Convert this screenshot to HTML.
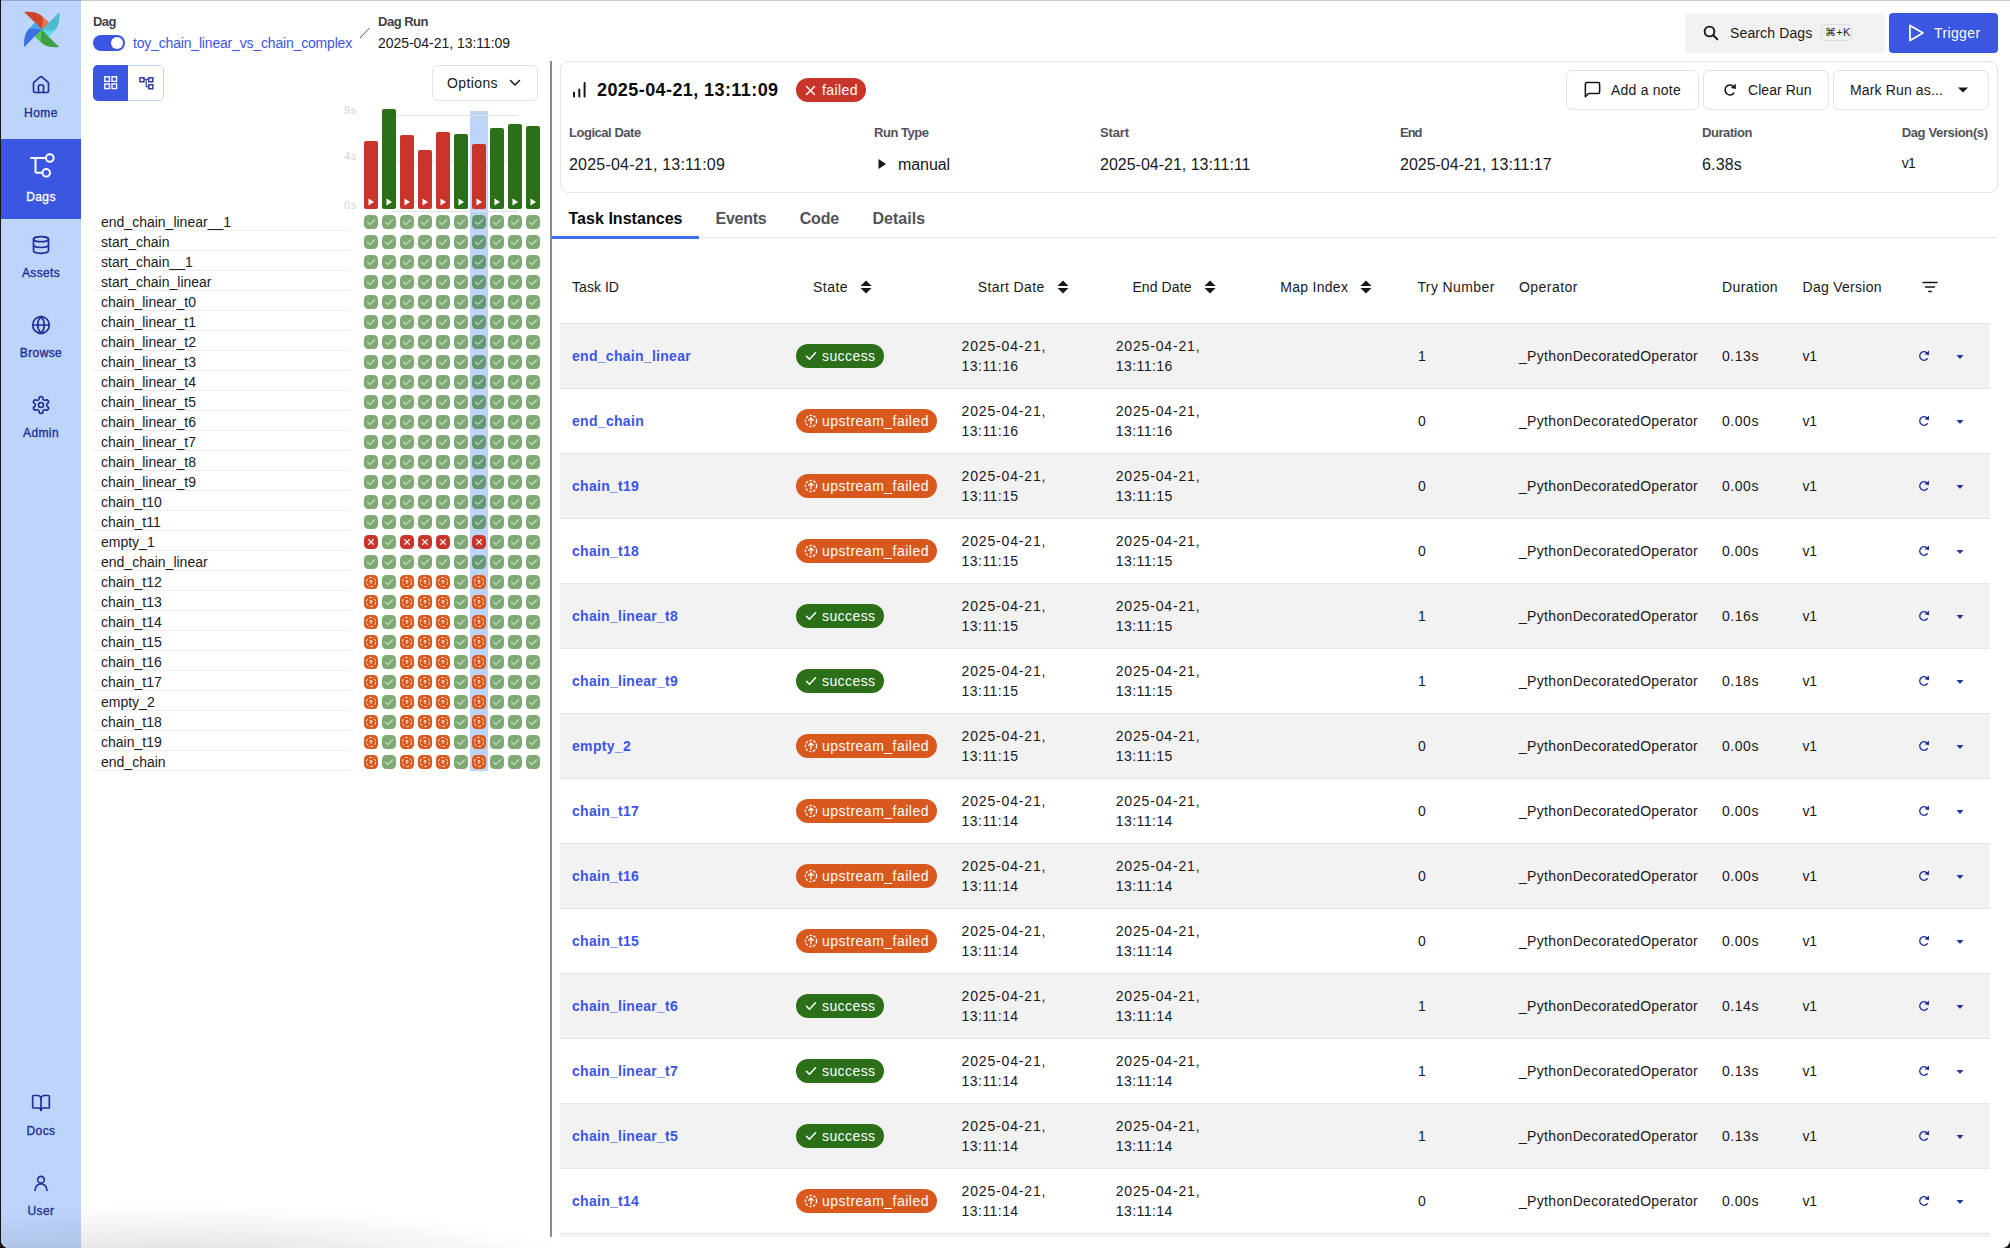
<!DOCTYPE html><html><head><meta charset="utf-8"><style>
html,body{margin:0;padding:0;}
body{width:2010px;height:1248px;overflow:hidden;background:#17130f;position:relative;font-family:"Liberation Sans",sans-serif;}
#app{position:absolute;left:1px;top:0;width:2009px;height:1248px;background:#fff;border-radius:0 0 8px 8px;overflow:hidden;}
.t{position:absolute;white-space:nowrap;font-family:"Liberation Sans",sans-serif;}
svg{display:block}
</style></head><body><div id="app">
<div style="position:absolute;left:-1px;top:0;width:2010px;height:1248px;">
<div style="position:absolute;left:1px;top:0px;width:80px;height:1248px;background:#bed5fb;"></div>
<div style="position:absolute;left:1px;top:0px;width:2009px;height:1px;background:#c9c9c9;"></div>
<div style="position:absolute;left:1px;top:0px;width:80px;height:1px;background:#8fa6cc;"></div>
<svg style="position:absolute;left:0px;top:0px;" width="81" height="60" viewBox="0 0 81 60"><g transform="translate(41.8 29.6) rotate(0)"><path d="M0 0 L-6.5 -6.8 L-17.7 -17.7 C-10 -18 -3 -17 1 -12.5 C4 -9.5 6 -8 7.2 -6.7 Z" fill="#d0442a"/><path d="M0 0 L1 -12.5 C4 -9.5 6 -8 7.2 -6.7 Z" fill="#ee714f"/></g><g transform="translate(41.8 29.6) rotate(90)"><path d="M0 0 L-6.5 -6.8 L-17.7 -17.7 C-10 -18 -3 -17 1 -12.5 C4 -9.5 6 -8 7.2 -6.7 Z" fill="#4bbccc"/><path d="M0 0 L1 -12.5 C4 -9.5 6 -8 7.2 -6.7 Z" fill="#5bd8ea"/></g><g transform="translate(41.8 29.6) rotate(180)"><path d="M0 0 L-6.5 -6.8 L-17.7 -17.7 C-10 -18 -3 -17 1 -12.5 C4 -9.5 6 -8 7.2 -6.7 Z" fill="#3d9f46"/><path d="M0 0 L1 -12.5 C4 -9.5 6 -8 7.2 -6.7 Z" fill="#50c95a"/></g><g transform="translate(41.8 29.6) rotate(270)"><path d="M0 0 L-6.5 -6.8 L-17.7 -17.7 C-10 -18 -3 -17 1 -12.5 C4 -9.5 6 -8 7.2 -6.7 Z" fill="#3a6fe0"/><path d="M0 0 L1 -12.5 C4 -9.5 6 -8 7.2 -6.7 Z" fill="#48a9f2"/></g></svg>
<svg style="position:absolute;left:31px;top:75px;" width="20" height="20" viewBox="0 0 24 24"><g fill="none" stroke="#1f2f96" stroke-width="2" stroke-linecap="round" stroke-linejoin="round"><path d="M15 21v-8a1 1 0 0 0-1-1h-4a1 1 0 0 0-1 1v8"/><path d="M3 10a2 2 0 0 1 .709-1.528l7-5.999a2 2 0 0 1 2.582 0l7 5.999A2 2 0 0 1 21 10v9a2 2 0 0 1-2 2H5a2 2 0 0 1-2-2z"/></g></svg>
<div class="t" style="left:24.034203125px;top:107px;font-size:12px;line-height:12px;color:#1f2f96;letter-spacing:0.480px;-webkit-text-stroke:0.35px #1f2f96;">Home</div>
<div style="position:absolute;left:1px;top:139px;width:80px;height:80px;background:#3b56e0;"></div>
<svg style="position:absolute;left:30px;top:153px;" width="25" height="25" viewBox="0 0 25 25"><g fill="none" stroke="#ffffff" stroke-width="2" stroke-linecap="round" stroke-linejoin="round"><path d="M1 5h14.8"/><circle cx="19.8" cy="5" r="3.8"/><path d="M5.5 5v13.3a1.5 1.5 0 0 0 1.5 1.5h5.5"/><circle cx="16.2" cy="19.8" r="3.8"/></g></svg>
<div class="t" style="left:26.1521328125px;top:191px;font-size:12px;line-height:12px;color:#ffffff;letter-spacing:0.420px;-webkit-text-stroke:0.35px #ffffff;">Dags</div>
<svg style="position:absolute;left:31px;top:235px;" width="20" height="20" viewBox="0 0 24 24"><g fill="none" stroke="#1f2f96" stroke-width="2" stroke-linecap="round" stroke-linejoin="round"><ellipse cx="12" cy="5" rx="9" ry="3"/><path d="M3 5V19A9 3 0 0 0 21 19V5"/><path d="M3 12A9 3 0 0 0 21 12"/></g></svg>
<div class="t" style="left:21.913375px;top:267px;font-size:12px;line-height:12px;color:#1f2f96;letter-spacing:0.360px;-webkit-text-stroke:0.35px #1f2f96;">Assets</div>
<svg style="position:absolute;left:31px;top:315px;" width="20" height="20" viewBox="0 0 24 24"><g fill="none" stroke="#1f2f96" stroke-width="2" stroke-linecap="round" stroke-linejoin="round"><circle cx="12" cy="12" r="10"/><path d="M12 2a14.5 14.5 0 0 0 0 20 14.5 14.5 0 0 0 0-20"/><path d="M2 12h20"/></g></svg>
<div class="t" style="left:19.7921328125px;top:347px;font-size:12px;line-height:12px;color:#1f2f96;letter-spacing:0.400px;-webkit-text-stroke:0.35px #1f2f96;">Browse</div>
<svg style="position:absolute;left:31px;top:395px;" width="20" height="20" viewBox="0 0 24 24"><g fill="none" stroke="#1f2f96" stroke-width="2" stroke-linecap="round" stroke-linejoin="round"><path d="M12.22 2h-.44a2 2 0 0 0-2 2v.18a2 2 0 0 1-1 1.73l-.43.25a2 2 0 0 1-2 0l-.15-.08a2 2 0 0 0-2.73.73l-.22.38a2 2 0 0 0 .73 2.73l.15.1a2 2 0 0 1 1 1.72v.51a2 2 0 0 1-1 1.74l-.15.09a2 2 0 0 0-.73 2.73l.22.38a2 2 0 0 0 2.73.73l.15-.08a2 2 0 0 1 2 0l.43.25a2 2 0 0 1 1 1.73V20a2 2 0 0 0 2 2h.44a2 2 0 0 0 2-2v-.18a2 2 0 0 1 1-1.73l.43-.25a2 2 0 0 1 2 0l.15.08a2 2 0 0 0 2.73-.73l.22-.39a2 2 0 0 0-.73-2.73l-.15-.08a2 2 0 0 1-1-1.74v-.5a2 2 0 0 1 1-1.74l.15-.09a2 2 0 0 0 .73-2.73l-.22-.38a2 2 0 0 0-2.73-.73l-.15.08a2 2 0 0 1-2 0l-.43-.25a2 2 0 0 1-1-1.73V4a2 2 0 0 0-2-2z"/><circle cx="12" cy="12" r="3"/></g></svg>
<div class="t" style="left:22.9721328125px;top:427px;font-size:12px;line-height:12px;color:#1f2f96;letter-spacing:0.408px;-webkit-text-stroke:0.35px #1f2f96;">Admin</div>
<svg style="position:absolute;left:31px;top:1093px;" width="20" height="20" viewBox="0 0 24 24"><g fill="none" stroke="#1f2f96" stroke-width="2" stroke-linecap="round" stroke-linejoin="round"><path d="M12 7v14"/><path d="M3 18a1 1 0 0 1-1-1V4a1 1 0 0 1 1-1h5a4 4 0 0 1 4 4 4 4 0 0 1 4-4h5a1 1 0 0 1 1 1v13a1 1 0 0 1-1 1h-6a3 3 0 0 0-3 3 3 3 0 0 0-3-3z"/></g></svg>
<div class="t" style="left:26.50946875px;top:1125px;font-size:12px;line-height:12px;color:#1f2f96;letter-spacing:0.410px;-webkit-text-stroke:0.35px #1f2f96;">Docs</div>
<svg style="position:absolute;left:31px;top:1173px;" width="20" height="20" viewBox="0 0 24 24"><g fill="none" stroke="#1f2f96" stroke-width="2" stroke-linecap="round" stroke-linejoin="round"><circle cx="12" cy="8" r="4"/><path d="M5 21v-1a7 7 0 0 1 14 0v1"/></g></svg>
<div class="t" style="left:27.5715390625px;top:1205px;font-size:12px;line-height:12px;color:#1f2f96;letter-spacing:0.380px;-webkit-text-stroke:0.35px #1f2f96;">User</div>
<div class="t" style="left:93px;top:15px;font-size:13px;line-height:13px;color:#3f3f46;font-weight:700;letter-spacing:-0.520px;">Dag</div>
<div style="position:absolute;left:93px;top:35px;width:32px;height:16px;background:#3b56e0;border-radius:8px;"></div>
<div style="position:absolute;left:111px;top:37px;width:12px;height:12px;background:#fff;border-radius:6px;"></div>
<div class="t" style="left:133px;top:36px;font-size:14px;line-height:14px;color:#3b55e6;letter-spacing:-0.179px;">toy_chain_linear_vs_chain_complex</div>
<svg style="position:absolute;left:358px;top:26px;" width="14" height="14" viewBox="0 0 14 14"><line x1="2" y1="12" x2="11.5" y2="2" stroke="#52525b" stroke-width="1"/></svg>
<div class="t" style="left:378px;top:15px;font-size:13px;line-height:13px;color:#3f3f46;font-weight:700;letter-spacing:-0.491px;">Dag Run</div>
<div class="t" style="left:378px;top:36px;font-size:14px;line-height:14px;color:#18181b;letter-spacing:-0.042px;">2025-04-21, 13:11:09</div>
<div style="position:absolute;left:1685px;top:13px;width:200px;height:40px;background:#f2f2f2;border-radius:4px;"></div>
<svg style="position:absolute;left:1702px;top:24px;" width="18" height="18" viewBox="0 0 24 24"><g fill="none" stroke="#18181b" stroke-width="2.6" stroke-linecap="round"><circle cx="10" cy="10" r="6.5"/><path d="M15 15l5.5 5.5"/></g></svg>
<div class="t" style="left:1730px;top:26px;font-size:14px;line-height:14px;color:#18181b;letter-spacing:0.134px;">Search Dags</div>
<div style="position:absolute;left:1821px;top:24px;width:31px;height:17px;background:#f1f1f2;border:1px solid #dedee2;border-radius:4px;box-sizing:border-box;"></div>
<div class="t" style="left:1825px;top:27px;font-size:11px;line-height:11px;color:#27272a;letter-spacing:0.330px;">⌘+K</div>
<div style="position:absolute;left:1889px;top:13px;width:109px;height:40px;background:#3b56e0;border-radius:4px;"></div>
<svg style="position:absolute;left:1906px;top:24px;" width="20" height="18" viewBox="0 0 20 18"><path d="M4 1.5L17 9 4 16.5z" fill="none" stroke="#fff" stroke-width="1.8" stroke-linejoin="round"/></svg>
<div class="t" style="left:1934px;top:26px;font-size:14px;line-height:14px;color:#fff;letter-spacing:0.382px;">Trigger</div>
<div style="position:absolute;left:93px;top:65px;width:71px;height:36px;border:1px solid #bcd3fb;border-radius:5px;box-sizing:border-box;background:#fff;"></div>
<div style="position:absolute;left:93px;top:65px;width:35px;height:36px;background:#3b56e0;border-radius:5px 0 0 5px;"></div>
<svg style="position:absolute;left:103px;top:75px;" width="16" height="16" viewBox="0 0 16 16"><g fill="none" stroke="#fff" stroke-width="1.4"><rect x="1.8" y="1.8" width="4.6" height="4.6"/><rect x="9" y="1.8" width="4.6" height="4.6"/><rect x="1.8" y="9" width="4.6" height="4.6"/><rect x="9" y="9" width="4.6" height="4.6"/></g></svg>
<svg style="position:absolute;left:138px;top:75px;" width="16" height="16" viewBox="0 0 16 16"><g fill="none" stroke="#1f2f96" stroke-width="1.4"><rect x="2" y="2.8" width="4" height="4"/><rect x="10.8" y="2.8" width="4" height="4"/><rect x="10.8" y="9.8" width="4" height="4"/><path d="M6 4.3h4.8M8.2 4.3v7.5h2.6" stroke-width="1.1"/></g></svg>
<div style="position:absolute;left:432px;top:65px;width:106px;height:36px;border:1px solid #e4e4e7;border-radius:6px;box-sizing:border-box;background:#fff;"></div>
<div class="t" style="left:447px;top:76px;font-size:14px;line-height:14px;color:#18181b;letter-spacing:0.393px;">Options</div>
<svg style="position:absolute;left:509px;top:78px;" width="12" height="10" viewBox="0 0 12 10"><path d="M1.5 2.5l4.5 4.5 4.5-4.5" fill="none" stroke="#18181b" stroke-width="1.5" stroke-linecap="round" stroke-linejoin="round"/></svg>
<div style="position:absolute;left:470px;top:111px;width:18px;height:660px;background:#bed5fb;"></div>
<div style="position:absolute;left:392px;top:115px;width:125px;height:1px;background:#e4e4e7;"></div>
<div style="position:absolute;left:392px;top:161px;width:125px;height:1px;background:#e4e4e7;"></div>
<div style="position:absolute;left:392px;top:211px;width:125px;height:1px;background:#e4e4e7;"></div>
<div class="t" style="left:344px;top:105px;font-size:11px;line-height:11px;color:#d4d4d8;letter-spacing:0.691px;">9s</div>
<div class="t" style="left:344px;top:151px;font-size:11px;line-height:11px;color:#d4d4d8;letter-spacing:0.691px;">4s</div>
<div class="t" style="left:344px;top:200px;font-size:11px;line-height:11px;color:#d4d4d8;letter-spacing:0.691px;">0s</div>
<div style="position:absolute;left:364px;top:141px;width:14px;height:68px;background:#c9352a;border-radius:2px;"></div>
<svg style="position:absolute;left:368px;top:198px;" width="7" height="8" viewBox="0 0 7 8"><path d="M0.5 0.5L6 4 0.5 7.5z" fill="#fff"/></svg>
<div style="position:absolute;left:382px;top:109px;width:14px;height:100px;background:#2b7019;border-radius:2px;"></div>
<svg style="position:absolute;left:386px;top:198px;" width="7" height="8" viewBox="0 0 7 8"><path d="M0.5 0.5L6 4 0.5 7.5z" fill="#fff"/></svg>
<div style="position:absolute;left:400px;top:135px;width:14px;height:74px;background:#c9352a;border-radius:2px;"></div>
<svg style="position:absolute;left:404px;top:198px;" width="7" height="8" viewBox="0 0 7 8"><path d="M0.5 0.5L6 4 0.5 7.5z" fill="#fff"/></svg>
<div style="position:absolute;left:418px;top:150px;width:14px;height:59px;background:#c9352a;border-radius:2px;"></div>
<svg style="position:absolute;left:422px;top:198px;" width="7" height="8" viewBox="0 0 7 8"><path d="M0.5 0.5L6 4 0.5 7.5z" fill="#fff"/></svg>
<div style="position:absolute;left:436px;top:132px;width:14px;height:77px;background:#c9352a;border-radius:2px;"></div>
<svg style="position:absolute;left:440px;top:198px;" width="7" height="8" viewBox="0 0 7 8"><path d="M0.5 0.5L6 4 0.5 7.5z" fill="#fff"/></svg>
<div style="position:absolute;left:454px;top:134px;width:14px;height:75px;background:#2b7019;border-radius:2px;"></div>
<svg style="position:absolute;left:458px;top:198px;" width="7" height="8" viewBox="0 0 7 8"><path d="M0.5 0.5L6 4 0.5 7.5z" fill="#fff"/></svg>
<div style="position:absolute;left:472px;top:144px;width:14px;height:65px;background:#c9352a;border-radius:2px;"></div>
<svg style="position:absolute;left:476px;top:198px;" width="7" height="8" viewBox="0 0 7 8"><path d="M0.5 0.5L6 4 0.5 7.5z" fill="#fff"/></svg>
<div style="position:absolute;left:490px;top:128px;width:14px;height:81px;background:#2b7019;border-radius:2px;"></div>
<svg style="position:absolute;left:494px;top:198px;" width="7" height="8" viewBox="0 0 7 8"><path d="M0.5 0.5L6 4 0.5 7.5z" fill="#fff"/></svg>
<div style="position:absolute;left:508px;top:124px;width:14px;height:85px;background:#2b7019;border-radius:2px;"></div>
<svg style="position:absolute;left:512px;top:198px;" width="7" height="8" viewBox="0 0 7 8"><path d="M0.5 0.5L6 4 0.5 7.5z" fill="#fff"/></svg>
<div style="position:absolute;left:526px;top:126px;width:14px;height:83px;background:#2b7019;border-radius:2px;"></div>
<svg style="position:absolute;left:530px;top:198px;" width="7" height="8" viewBox="0 0 7 8"><path d="M0.5 0.5L6 4 0.5 7.5z" fill="#fff"/></svg>
<div class="t" style="left:101px;top:215px;font-size:14px;line-height:14px;color:#202024;">end_chain_linear__1</div>
<div style="position:absolute;left:93px;top:230px;width:257px;height:1px;background:#ededf0;"></div>
<svg style="position:absolute;left:364px;top:215px" width="14" height="14" viewBox="0 0 14 14"><rect width="14" height="14" rx="4.5" fill="#2b7019" fill-opacity="0.6"/><path d="M3.5 7.1l2.5 2.5 4.6-4.8" fill="none" stroke="#fff" stroke-width="0.95" stroke-linecap="round" stroke-linejoin="round"/></svg>
<svg style="position:absolute;left:382px;top:215px" width="14" height="14" viewBox="0 0 14 14"><rect width="14" height="14" rx="4.5" fill="#2b7019" fill-opacity="0.6"/><path d="M3.5 7.1l2.5 2.5 4.6-4.8" fill="none" stroke="#fff" stroke-width="0.95" stroke-linecap="round" stroke-linejoin="round"/></svg>
<svg style="position:absolute;left:400px;top:215px" width="14" height="14" viewBox="0 0 14 14"><rect width="14" height="14" rx="4.5" fill="#2b7019" fill-opacity="0.6"/><path d="M3.5 7.1l2.5 2.5 4.6-4.8" fill="none" stroke="#fff" stroke-width="0.95" stroke-linecap="round" stroke-linejoin="round"/></svg>
<svg style="position:absolute;left:418px;top:215px" width="14" height="14" viewBox="0 0 14 14"><rect width="14" height="14" rx="4.5" fill="#2b7019" fill-opacity="0.6"/><path d="M3.5 7.1l2.5 2.5 4.6-4.8" fill="none" stroke="#fff" stroke-width="0.95" stroke-linecap="round" stroke-linejoin="round"/></svg>
<svg style="position:absolute;left:436px;top:215px" width="14" height="14" viewBox="0 0 14 14"><rect width="14" height="14" rx="4.5" fill="#2b7019" fill-opacity="0.6"/><path d="M3.5 7.1l2.5 2.5 4.6-4.8" fill="none" stroke="#fff" stroke-width="0.95" stroke-linecap="round" stroke-linejoin="round"/></svg>
<svg style="position:absolute;left:454px;top:215px" width="14" height="14" viewBox="0 0 14 14"><rect width="14" height="14" rx="4.5" fill="#2b7019" fill-opacity="0.6"/><path d="M3.5 7.1l2.5 2.5 4.6-4.8" fill="none" stroke="#fff" stroke-width="0.95" stroke-linecap="round" stroke-linejoin="round"/></svg>
<svg style="position:absolute;left:472px;top:215px" width="14" height="14" viewBox="0 0 14 14"><rect width="14" height="14" rx="4.5" fill="#2b7019" fill-opacity="0.6"/><path d="M3.5 7.1l2.5 2.5 4.6-4.8" fill="none" stroke="#fff" stroke-width="0.95" stroke-linecap="round" stroke-linejoin="round"/></svg>
<svg style="position:absolute;left:490px;top:215px" width="14" height="14" viewBox="0 0 14 14"><rect width="14" height="14" rx="4.5" fill="#2b7019" fill-opacity="0.6"/><path d="M3.5 7.1l2.5 2.5 4.6-4.8" fill="none" stroke="#fff" stroke-width="0.95" stroke-linecap="round" stroke-linejoin="round"/></svg>
<svg style="position:absolute;left:508px;top:215px" width="14" height="14" viewBox="0 0 14 14"><rect width="14" height="14" rx="4.5" fill="#2b7019" fill-opacity="0.6"/><path d="M3.5 7.1l2.5 2.5 4.6-4.8" fill="none" stroke="#fff" stroke-width="0.95" stroke-linecap="round" stroke-linejoin="round"/></svg>
<svg style="position:absolute;left:526px;top:215px" width="14" height="14" viewBox="0 0 14 14"><rect width="14" height="14" rx="4.5" fill="#2b7019" fill-opacity="0.6"/><path d="M3.5 7.1l2.5 2.5 4.6-4.8" fill="none" stroke="#fff" stroke-width="0.95" stroke-linecap="round" stroke-linejoin="round"/></svg>
<div class="t" style="left:101px;top:235px;font-size:14px;line-height:14px;color:#202024;">start_chain</div>
<div style="position:absolute;left:93px;top:250px;width:257px;height:1px;background:#ededf0;"></div>
<svg style="position:absolute;left:364px;top:235px" width="14" height="14" viewBox="0 0 14 14"><rect width="14" height="14" rx="4.5" fill="#2b7019" fill-opacity="0.6"/><path d="M3.5 7.1l2.5 2.5 4.6-4.8" fill="none" stroke="#fff" stroke-width="0.95" stroke-linecap="round" stroke-linejoin="round"/></svg>
<svg style="position:absolute;left:382px;top:235px" width="14" height="14" viewBox="0 0 14 14"><rect width="14" height="14" rx="4.5" fill="#2b7019" fill-opacity="0.6"/><path d="M3.5 7.1l2.5 2.5 4.6-4.8" fill="none" stroke="#fff" stroke-width="0.95" stroke-linecap="round" stroke-linejoin="round"/></svg>
<svg style="position:absolute;left:400px;top:235px" width="14" height="14" viewBox="0 0 14 14"><rect width="14" height="14" rx="4.5" fill="#2b7019" fill-opacity="0.6"/><path d="M3.5 7.1l2.5 2.5 4.6-4.8" fill="none" stroke="#fff" stroke-width="0.95" stroke-linecap="round" stroke-linejoin="round"/></svg>
<svg style="position:absolute;left:418px;top:235px" width="14" height="14" viewBox="0 0 14 14"><rect width="14" height="14" rx="4.5" fill="#2b7019" fill-opacity="0.6"/><path d="M3.5 7.1l2.5 2.5 4.6-4.8" fill="none" stroke="#fff" stroke-width="0.95" stroke-linecap="round" stroke-linejoin="round"/></svg>
<svg style="position:absolute;left:436px;top:235px" width="14" height="14" viewBox="0 0 14 14"><rect width="14" height="14" rx="4.5" fill="#2b7019" fill-opacity="0.6"/><path d="M3.5 7.1l2.5 2.5 4.6-4.8" fill="none" stroke="#fff" stroke-width="0.95" stroke-linecap="round" stroke-linejoin="round"/></svg>
<svg style="position:absolute;left:454px;top:235px" width="14" height="14" viewBox="0 0 14 14"><rect width="14" height="14" rx="4.5" fill="#2b7019" fill-opacity="0.6"/><path d="M3.5 7.1l2.5 2.5 4.6-4.8" fill="none" stroke="#fff" stroke-width="0.95" stroke-linecap="round" stroke-linejoin="round"/></svg>
<svg style="position:absolute;left:472px;top:235px" width="14" height="14" viewBox="0 0 14 14"><rect width="14" height="14" rx="4.5" fill="#2b7019" fill-opacity="0.6"/><path d="M3.5 7.1l2.5 2.5 4.6-4.8" fill="none" stroke="#fff" stroke-width="0.95" stroke-linecap="round" stroke-linejoin="round"/></svg>
<svg style="position:absolute;left:490px;top:235px" width="14" height="14" viewBox="0 0 14 14"><rect width="14" height="14" rx="4.5" fill="#2b7019" fill-opacity="0.6"/><path d="M3.5 7.1l2.5 2.5 4.6-4.8" fill="none" stroke="#fff" stroke-width="0.95" stroke-linecap="round" stroke-linejoin="round"/></svg>
<svg style="position:absolute;left:508px;top:235px" width="14" height="14" viewBox="0 0 14 14"><rect width="14" height="14" rx="4.5" fill="#2b7019" fill-opacity="0.6"/><path d="M3.5 7.1l2.5 2.5 4.6-4.8" fill="none" stroke="#fff" stroke-width="0.95" stroke-linecap="round" stroke-linejoin="round"/></svg>
<svg style="position:absolute;left:526px;top:235px" width="14" height="14" viewBox="0 0 14 14"><rect width="14" height="14" rx="4.5" fill="#2b7019" fill-opacity="0.6"/><path d="M3.5 7.1l2.5 2.5 4.6-4.8" fill="none" stroke="#fff" stroke-width="0.95" stroke-linecap="round" stroke-linejoin="round"/></svg>
<div class="t" style="left:101px;top:255px;font-size:14px;line-height:14px;color:#202024;">start_chain__1</div>
<div style="position:absolute;left:93px;top:270px;width:257px;height:1px;background:#ededf0;"></div>
<svg style="position:absolute;left:364px;top:255px" width="14" height="14" viewBox="0 0 14 14"><rect width="14" height="14" rx="4.5" fill="#2b7019" fill-opacity="0.6"/><path d="M3.5 7.1l2.5 2.5 4.6-4.8" fill="none" stroke="#fff" stroke-width="0.95" stroke-linecap="round" stroke-linejoin="round"/></svg>
<svg style="position:absolute;left:382px;top:255px" width="14" height="14" viewBox="0 0 14 14"><rect width="14" height="14" rx="4.5" fill="#2b7019" fill-opacity="0.6"/><path d="M3.5 7.1l2.5 2.5 4.6-4.8" fill="none" stroke="#fff" stroke-width="0.95" stroke-linecap="round" stroke-linejoin="round"/></svg>
<svg style="position:absolute;left:400px;top:255px" width="14" height="14" viewBox="0 0 14 14"><rect width="14" height="14" rx="4.5" fill="#2b7019" fill-opacity="0.6"/><path d="M3.5 7.1l2.5 2.5 4.6-4.8" fill="none" stroke="#fff" stroke-width="0.95" stroke-linecap="round" stroke-linejoin="round"/></svg>
<svg style="position:absolute;left:418px;top:255px" width="14" height="14" viewBox="0 0 14 14"><rect width="14" height="14" rx="4.5" fill="#2b7019" fill-opacity="0.6"/><path d="M3.5 7.1l2.5 2.5 4.6-4.8" fill="none" stroke="#fff" stroke-width="0.95" stroke-linecap="round" stroke-linejoin="round"/></svg>
<svg style="position:absolute;left:436px;top:255px" width="14" height="14" viewBox="0 0 14 14"><rect width="14" height="14" rx="4.5" fill="#2b7019" fill-opacity="0.6"/><path d="M3.5 7.1l2.5 2.5 4.6-4.8" fill="none" stroke="#fff" stroke-width="0.95" stroke-linecap="round" stroke-linejoin="round"/></svg>
<svg style="position:absolute;left:454px;top:255px" width="14" height="14" viewBox="0 0 14 14"><rect width="14" height="14" rx="4.5" fill="#2b7019" fill-opacity="0.6"/><path d="M3.5 7.1l2.5 2.5 4.6-4.8" fill="none" stroke="#fff" stroke-width="0.95" stroke-linecap="round" stroke-linejoin="round"/></svg>
<svg style="position:absolute;left:472px;top:255px" width="14" height="14" viewBox="0 0 14 14"><rect width="14" height="14" rx="4.5" fill="#2b7019" fill-opacity="0.6"/><path d="M3.5 7.1l2.5 2.5 4.6-4.8" fill="none" stroke="#fff" stroke-width="0.95" stroke-linecap="round" stroke-linejoin="round"/></svg>
<svg style="position:absolute;left:490px;top:255px" width="14" height="14" viewBox="0 0 14 14"><rect width="14" height="14" rx="4.5" fill="#2b7019" fill-opacity="0.6"/><path d="M3.5 7.1l2.5 2.5 4.6-4.8" fill="none" stroke="#fff" stroke-width="0.95" stroke-linecap="round" stroke-linejoin="round"/></svg>
<svg style="position:absolute;left:508px;top:255px" width="14" height="14" viewBox="0 0 14 14"><rect width="14" height="14" rx="4.5" fill="#2b7019" fill-opacity="0.6"/><path d="M3.5 7.1l2.5 2.5 4.6-4.8" fill="none" stroke="#fff" stroke-width="0.95" stroke-linecap="round" stroke-linejoin="round"/></svg>
<svg style="position:absolute;left:526px;top:255px" width="14" height="14" viewBox="0 0 14 14"><rect width="14" height="14" rx="4.5" fill="#2b7019" fill-opacity="0.6"/><path d="M3.5 7.1l2.5 2.5 4.6-4.8" fill="none" stroke="#fff" stroke-width="0.95" stroke-linecap="round" stroke-linejoin="round"/></svg>
<div class="t" style="left:101px;top:275px;font-size:14px;line-height:14px;color:#202024;">start_chain_linear</div>
<div style="position:absolute;left:93px;top:290px;width:257px;height:1px;background:#ededf0;"></div>
<svg style="position:absolute;left:364px;top:275px" width="14" height="14" viewBox="0 0 14 14"><rect width="14" height="14" rx="4.5" fill="#2b7019" fill-opacity="0.6"/><path d="M3.5 7.1l2.5 2.5 4.6-4.8" fill="none" stroke="#fff" stroke-width="0.95" stroke-linecap="round" stroke-linejoin="round"/></svg>
<svg style="position:absolute;left:382px;top:275px" width="14" height="14" viewBox="0 0 14 14"><rect width="14" height="14" rx="4.5" fill="#2b7019" fill-opacity="0.6"/><path d="M3.5 7.1l2.5 2.5 4.6-4.8" fill="none" stroke="#fff" stroke-width="0.95" stroke-linecap="round" stroke-linejoin="round"/></svg>
<svg style="position:absolute;left:400px;top:275px" width="14" height="14" viewBox="0 0 14 14"><rect width="14" height="14" rx="4.5" fill="#2b7019" fill-opacity="0.6"/><path d="M3.5 7.1l2.5 2.5 4.6-4.8" fill="none" stroke="#fff" stroke-width="0.95" stroke-linecap="round" stroke-linejoin="round"/></svg>
<svg style="position:absolute;left:418px;top:275px" width="14" height="14" viewBox="0 0 14 14"><rect width="14" height="14" rx="4.5" fill="#2b7019" fill-opacity="0.6"/><path d="M3.5 7.1l2.5 2.5 4.6-4.8" fill="none" stroke="#fff" stroke-width="0.95" stroke-linecap="round" stroke-linejoin="round"/></svg>
<svg style="position:absolute;left:436px;top:275px" width="14" height="14" viewBox="0 0 14 14"><rect width="14" height="14" rx="4.5" fill="#2b7019" fill-opacity="0.6"/><path d="M3.5 7.1l2.5 2.5 4.6-4.8" fill="none" stroke="#fff" stroke-width="0.95" stroke-linecap="round" stroke-linejoin="round"/></svg>
<svg style="position:absolute;left:454px;top:275px" width="14" height="14" viewBox="0 0 14 14"><rect width="14" height="14" rx="4.5" fill="#2b7019" fill-opacity="0.6"/><path d="M3.5 7.1l2.5 2.5 4.6-4.8" fill="none" stroke="#fff" stroke-width="0.95" stroke-linecap="round" stroke-linejoin="round"/></svg>
<svg style="position:absolute;left:472px;top:275px" width="14" height="14" viewBox="0 0 14 14"><rect width="14" height="14" rx="4.5" fill="#2b7019" fill-opacity="0.6"/><path d="M3.5 7.1l2.5 2.5 4.6-4.8" fill="none" stroke="#fff" stroke-width="0.95" stroke-linecap="round" stroke-linejoin="round"/></svg>
<svg style="position:absolute;left:490px;top:275px" width="14" height="14" viewBox="0 0 14 14"><rect width="14" height="14" rx="4.5" fill="#2b7019" fill-opacity="0.6"/><path d="M3.5 7.1l2.5 2.5 4.6-4.8" fill="none" stroke="#fff" stroke-width="0.95" stroke-linecap="round" stroke-linejoin="round"/></svg>
<svg style="position:absolute;left:508px;top:275px" width="14" height="14" viewBox="0 0 14 14"><rect width="14" height="14" rx="4.5" fill="#2b7019" fill-opacity="0.6"/><path d="M3.5 7.1l2.5 2.5 4.6-4.8" fill="none" stroke="#fff" stroke-width="0.95" stroke-linecap="round" stroke-linejoin="round"/></svg>
<svg style="position:absolute;left:526px;top:275px" width="14" height="14" viewBox="0 0 14 14"><rect width="14" height="14" rx="4.5" fill="#2b7019" fill-opacity="0.6"/><path d="M3.5 7.1l2.5 2.5 4.6-4.8" fill="none" stroke="#fff" stroke-width="0.95" stroke-linecap="round" stroke-linejoin="round"/></svg>
<div class="t" style="left:101px;top:295px;font-size:14px;line-height:14px;color:#202024;">chain_linear_t0</div>
<div style="position:absolute;left:93px;top:310px;width:257px;height:1px;background:#ededf0;"></div>
<svg style="position:absolute;left:364px;top:295px" width="14" height="14" viewBox="0 0 14 14"><rect width="14" height="14" rx="4.5" fill="#2b7019" fill-opacity="0.6"/><path d="M3.5 7.1l2.5 2.5 4.6-4.8" fill="none" stroke="#fff" stroke-width="0.95" stroke-linecap="round" stroke-linejoin="round"/></svg>
<svg style="position:absolute;left:382px;top:295px" width="14" height="14" viewBox="0 0 14 14"><rect width="14" height="14" rx="4.5" fill="#2b7019" fill-opacity="0.6"/><path d="M3.5 7.1l2.5 2.5 4.6-4.8" fill="none" stroke="#fff" stroke-width="0.95" stroke-linecap="round" stroke-linejoin="round"/></svg>
<svg style="position:absolute;left:400px;top:295px" width="14" height="14" viewBox="0 0 14 14"><rect width="14" height="14" rx="4.5" fill="#2b7019" fill-opacity="0.6"/><path d="M3.5 7.1l2.5 2.5 4.6-4.8" fill="none" stroke="#fff" stroke-width="0.95" stroke-linecap="round" stroke-linejoin="round"/></svg>
<svg style="position:absolute;left:418px;top:295px" width="14" height="14" viewBox="0 0 14 14"><rect width="14" height="14" rx="4.5" fill="#2b7019" fill-opacity="0.6"/><path d="M3.5 7.1l2.5 2.5 4.6-4.8" fill="none" stroke="#fff" stroke-width="0.95" stroke-linecap="round" stroke-linejoin="round"/></svg>
<svg style="position:absolute;left:436px;top:295px" width="14" height="14" viewBox="0 0 14 14"><rect width="14" height="14" rx="4.5" fill="#2b7019" fill-opacity="0.6"/><path d="M3.5 7.1l2.5 2.5 4.6-4.8" fill="none" stroke="#fff" stroke-width="0.95" stroke-linecap="round" stroke-linejoin="round"/></svg>
<svg style="position:absolute;left:454px;top:295px" width="14" height="14" viewBox="0 0 14 14"><rect width="14" height="14" rx="4.5" fill="#2b7019" fill-opacity="0.6"/><path d="M3.5 7.1l2.5 2.5 4.6-4.8" fill="none" stroke="#fff" stroke-width="0.95" stroke-linecap="round" stroke-linejoin="round"/></svg>
<svg style="position:absolute;left:472px;top:295px" width="14" height="14" viewBox="0 0 14 14"><rect width="14" height="14" rx="4.5" fill="#2b7019" fill-opacity="0.6"/><path d="M3.5 7.1l2.5 2.5 4.6-4.8" fill="none" stroke="#fff" stroke-width="0.95" stroke-linecap="round" stroke-linejoin="round"/></svg>
<svg style="position:absolute;left:490px;top:295px" width="14" height="14" viewBox="0 0 14 14"><rect width="14" height="14" rx="4.5" fill="#2b7019" fill-opacity="0.6"/><path d="M3.5 7.1l2.5 2.5 4.6-4.8" fill="none" stroke="#fff" stroke-width="0.95" stroke-linecap="round" stroke-linejoin="round"/></svg>
<svg style="position:absolute;left:508px;top:295px" width="14" height="14" viewBox="0 0 14 14"><rect width="14" height="14" rx="4.5" fill="#2b7019" fill-opacity="0.6"/><path d="M3.5 7.1l2.5 2.5 4.6-4.8" fill="none" stroke="#fff" stroke-width="0.95" stroke-linecap="round" stroke-linejoin="round"/></svg>
<svg style="position:absolute;left:526px;top:295px" width="14" height="14" viewBox="0 0 14 14"><rect width="14" height="14" rx="4.5" fill="#2b7019" fill-opacity="0.6"/><path d="M3.5 7.1l2.5 2.5 4.6-4.8" fill="none" stroke="#fff" stroke-width="0.95" stroke-linecap="round" stroke-linejoin="round"/></svg>
<div class="t" style="left:101px;top:315px;font-size:14px;line-height:14px;color:#202024;">chain_linear_t1</div>
<div style="position:absolute;left:93px;top:330px;width:257px;height:1px;background:#ededf0;"></div>
<svg style="position:absolute;left:364px;top:315px" width="14" height="14" viewBox="0 0 14 14"><rect width="14" height="14" rx="4.5" fill="#2b7019" fill-opacity="0.6"/><path d="M3.5 7.1l2.5 2.5 4.6-4.8" fill="none" stroke="#fff" stroke-width="0.95" stroke-linecap="round" stroke-linejoin="round"/></svg>
<svg style="position:absolute;left:382px;top:315px" width="14" height="14" viewBox="0 0 14 14"><rect width="14" height="14" rx="4.5" fill="#2b7019" fill-opacity="0.6"/><path d="M3.5 7.1l2.5 2.5 4.6-4.8" fill="none" stroke="#fff" stroke-width="0.95" stroke-linecap="round" stroke-linejoin="round"/></svg>
<svg style="position:absolute;left:400px;top:315px" width="14" height="14" viewBox="0 0 14 14"><rect width="14" height="14" rx="4.5" fill="#2b7019" fill-opacity="0.6"/><path d="M3.5 7.1l2.5 2.5 4.6-4.8" fill="none" stroke="#fff" stroke-width="0.95" stroke-linecap="round" stroke-linejoin="round"/></svg>
<svg style="position:absolute;left:418px;top:315px" width="14" height="14" viewBox="0 0 14 14"><rect width="14" height="14" rx="4.5" fill="#2b7019" fill-opacity="0.6"/><path d="M3.5 7.1l2.5 2.5 4.6-4.8" fill="none" stroke="#fff" stroke-width="0.95" stroke-linecap="round" stroke-linejoin="round"/></svg>
<svg style="position:absolute;left:436px;top:315px" width="14" height="14" viewBox="0 0 14 14"><rect width="14" height="14" rx="4.5" fill="#2b7019" fill-opacity="0.6"/><path d="M3.5 7.1l2.5 2.5 4.6-4.8" fill="none" stroke="#fff" stroke-width="0.95" stroke-linecap="round" stroke-linejoin="round"/></svg>
<svg style="position:absolute;left:454px;top:315px" width="14" height="14" viewBox="0 0 14 14"><rect width="14" height="14" rx="4.5" fill="#2b7019" fill-opacity="0.6"/><path d="M3.5 7.1l2.5 2.5 4.6-4.8" fill="none" stroke="#fff" stroke-width="0.95" stroke-linecap="round" stroke-linejoin="round"/></svg>
<svg style="position:absolute;left:472px;top:315px" width="14" height="14" viewBox="0 0 14 14"><rect width="14" height="14" rx="4.5" fill="#2b7019" fill-opacity="0.6"/><path d="M3.5 7.1l2.5 2.5 4.6-4.8" fill="none" stroke="#fff" stroke-width="0.95" stroke-linecap="round" stroke-linejoin="round"/></svg>
<svg style="position:absolute;left:490px;top:315px" width="14" height="14" viewBox="0 0 14 14"><rect width="14" height="14" rx="4.5" fill="#2b7019" fill-opacity="0.6"/><path d="M3.5 7.1l2.5 2.5 4.6-4.8" fill="none" stroke="#fff" stroke-width="0.95" stroke-linecap="round" stroke-linejoin="round"/></svg>
<svg style="position:absolute;left:508px;top:315px" width="14" height="14" viewBox="0 0 14 14"><rect width="14" height="14" rx="4.5" fill="#2b7019" fill-opacity="0.6"/><path d="M3.5 7.1l2.5 2.5 4.6-4.8" fill="none" stroke="#fff" stroke-width="0.95" stroke-linecap="round" stroke-linejoin="round"/></svg>
<svg style="position:absolute;left:526px;top:315px" width="14" height="14" viewBox="0 0 14 14"><rect width="14" height="14" rx="4.5" fill="#2b7019" fill-opacity="0.6"/><path d="M3.5 7.1l2.5 2.5 4.6-4.8" fill="none" stroke="#fff" stroke-width="0.95" stroke-linecap="round" stroke-linejoin="round"/></svg>
<div class="t" style="left:101px;top:335px;font-size:14px;line-height:14px;color:#202024;">chain_linear_t2</div>
<div style="position:absolute;left:93px;top:350px;width:257px;height:1px;background:#ededf0;"></div>
<svg style="position:absolute;left:364px;top:335px" width="14" height="14" viewBox="0 0 14 14"><rect width="14" height="14" rx="4.5" fill="#2b7019" fill-opacity="0.6"/><path d="M3.5 7.1l2.5 2.5 4.6-4.8" fill="none" stroke="#fff" stroke-width="0.95" stroke-linecap="round" stroke-linejoin="round"/></svg>
<svg style="position:absolute;left:382px;top:335px" width="14" height="14" viewBox="0 0 14 14"><rect width="14" height="14" rx="4.5" fill="#2b7019" fill-opacity="0.6"/><path d="M3.5 7.1l2.5 2.5 4.6-4.8" fill="none" stroke="#fff" stroke-width="0.95" stroke-linecap="round" stroke-linejoin="round"/></svg>
<svg style="position:absolute;left:400px;top:335px" width="14" height="14" viewBox="0 0 14 14"><rect width="14" height="14" rx="4.5" fill="#2b7019" fill-opacity="0.6"/><path d="M3.5 7.1l2.5 2.5 4.6-4.8" fill="none" stroke="#fff" stroke-width="0.95" stroke-linecap="round" stroke-linejoin="round"/></svg>
<svg style="position:absolute;left:418px;top:335px" width="14" height="14" viewBox="0 0 14 14"><rect width="14" height="14" rx="4.5" fill="#2b7019" fill-opacity="0.6"/><path d="M3.5 7.1l2.5 2.5 4.6-4.8" fill="none" stroke="#fff" stroke-width="0.95" stroke-linecap="round" stroke-linejoin="round"/></svg>
<svg style="position:absolute;left:436px;top:335px" width="14" height="14" viewBox="0 0 14 14"><rect width="14" height="14" rx="4.5" fill="#2b7019" fill-opacity="0.6"/><path d="M3.5 7.1l2.5 2.5 4.6-4.8" fill="none" stroke="#fff" stroke-width="0.95" stroke-linecap="round" stroke-linejoin="round"/></svg>
<svg style="position:absolute;left:454px;top:335px" width="14" height="14" viewBox="0 0 14 14"><rect width="14" height="14" rx="4.5" fill="#2b7019" fill-opacity="0.6"/><path d="M3.5 7.1l2.5 2.5 4.6-4.8" fill="none" stroke="#fff" stroke-width="0.95" stroke-linecap="round" stroke-linejoin="round"/></svg>
<svg style="position:absolute;left:472px;top:335px" width="14" height="14" viewBox="0 0 14 14"><rect width="14" height="14" rx="4.5" fill="#2b7019" fill-opacity="0.6"/><path d="M3.5 7.1l2.5 2.5 4.6-4.8" fill="none" stroke="#fff" stroke-width="0.95" stroke-linecap="round" stroke-linejoin="round"/></svg>
<svg style="position:absolute;left:490px;top:335px" width="14" height="14" viewBox="0 0 14 14"><rect width="14" height="14" rx="4.5" fill="#2b7019" fill-opacity="0.6"/><path d="M3.5 7.1l2.5 2.5 4.6-4.8" fill="none" stroke="#fff" stroke-width="0.95" stroke-linecap="round" stroke-linejoin="round"/></svg>
<svg style="position:absolute;left:508px;top:335px" width="14" height="14" viewBox="0 0 14 14"><rect width="14" height="14" rx="4.5" fill="#2b7019" fill-opacity="0.6"/><path d="M3.5 7.1l2.5 2.5 4.6-4.8" fill="none" stroke="#fff" stroke-width="0.95" stroke-linecap="round" stroke-linejoin="round"/></svg>
<svg style="position:absolute;left:526px;top:335px" width="14" height="14" viewBox="0 0 14 14"><rect width="14" height="14" rx="4.5" fill="#2b7019" fill-opacity="0.6"/><path d="M3.5 7.1l2.5 2.5 4.6-4.8" fill="none" stroke="#fff" stroke-width="0.95" stroke-linecap="round" stroke-linejoin="round"/></svg>
<div class="t" style="left:101px;top:355px;font-size:14px;line-height:14px;color:#202024;">chain_linear_t3</div>
<div style="position:absolute;left:93px;top:370px;width:257px;height:1px;background:#ededf0;"></div>
<svg style="position:absolute;left:364px;top:355px" width="14" height="14" viewBox="0 0 14 14"><rect width="14" height="14" rx="4.5" fill="#2b7019" fill-opacity="0.6"/><path d="M3.5 7.1l2.5 2.5 4.6-4.8" fill="none" stroke="#fff" stroke-width="0.95" stroke-linecap="round" stroke-linejoin="round"/></svg>
<svg style="position:absolute;left:382px;top:355px" width="14" height="14" viewBox="0 0 14 14"><rect width="14" height="14" rx="4.5" fill="#2b7019" fill-opacity="0.6"/><path d="M3.5 7.1l2.5 2.5 4.6-4.8" fill="none" stroke="#fff" stroke-width="0.95" stroke-linecap="round" stroke-linejoin="round"/></svg>
<svg style="position:absolute;left:400px;top:355px" width="14" height="14" viewBox="0 0 14 14"><rect width="14" height="14" rx="4.5" fill="#2b7019" fill-opacity="0.6"/><path d="M3.5 7.1l2.5 2.5 4.6-4.8" fill="none" stroke="#fff" stroke-width="0.95" stroke-linecap="round" stroke-linejoin="round"/></svg>
<svg style="position:absolute;left:418px;top:355px" width="14" height="14" viewBox="0 0 14 14"><rect width="14" height="14" rx="4.5" fill="#2b7019" fill-opacity="0.6"/><path d="M3.5 7.1l2.5 2.5 4.6-4.8" fill="none" stroke="#fff" stroke-width="0.95" stroke-linecap="round" stroke-linejoin="round"/></svg>
<svg style="position:absolute;left:436px;top:355px" width="14" height="14" viewBox="0 0 14 14"><rect width="14" height="14" rx="4.5" fill="#2b7019" fill-opacity="0.6"/><path d="M3.5 7.1l2.5 2.5 4.6-4.8" fill="none" stroke="#fff" stroke-width="0.95" stroke-linecap="round" stroke-linejoin="round"/></svg>
<svg style="position:absolute;left:454px;top:355px" width="14" height="14" viewBox="0 0 14 14"><rect width="14" height="14" rx="4.5" fill="#2b7019" fill-opacity="0.6"/><path d="M3.5 7.1l2.5 2.5 4.6-4.8" fill="none" stroke="#fff" stroke-width="0.95" stroke-linecap="round" stroke-linejoin="round"/></svg>
<svg style="position:absolute;left:472px;top:355px" width="14" height="14" viewBox="0 0 14 14"><rect width="14" height="14" rx="4.5" fill="#2b7019" fill-opacity="0.6"/><path d="M3.5 7.1l2.5 2.5 4.6-4.8" fill="none" stroke="#fff" stroke-width="0.95" stroke-linecap="round" stroke-linejoin="round"/></svg>
<svg style="position:absolute;left:490px;top:355px" width="14" height="14" viewBox="0 0 14 14"><rect width="14" height="14" rx="4.5" fill="#2b7019" fill-opacity="0.6"/><path d="M3.5 7.1l2.5 2.5 4.6-4.8" fill="none" stroke="#fff" stroke-width="0.95" stroke-linecap="round" stroke-linejoin="round"/></svg>
<svg style="position:absolute;left:508px;top:355px" width="14" height="14" viewBox="0 0 14 14"><rect width="14" height="14" rx="4.5" fill="#2b7019" fill-opacity="0.6"/><path d="M3.5 7.1l2.5 2.5 4.6-4.8" fill="none" stroke="#fff" stroke-width="0.95" stroke-linecap="round" stroke-linejoin="round"/></svg>
<svg style="position:absolute;left:526px;top:355px" width="14" height="14" viewBox="0 0 14 14"><rect width="14" height="14" rx="4.5" fill="#2b7019" fill-opacity="0.6"/><path d="M3.5 7.1l2.5 2.5 4.6-4.8" fill="none" stroke="#fff" stroke-width="0.95" stroke-linecap="round" stroke-linejoin="round"/></svg>
<div class="t" style="left:101px;top:375px;font-size:14px;line-height:14px;color:#202024;">chain_linear_t4</div>
<div style="position:absolute;left:93px;top:390px;width:257px;height:1px;background:#ededf0;"></div>
<svg style="position:absolute;left:364px;top:375px" width="14" height="14" viewBox="0 0 14 14"><rect width="14" height="14" rx="4.5" fill="#2b7019" fill-opacity="0.6"/><path d="M3.5 7.1l2.5 2.5 4.6-4.8" fill="none" stroke="#fff" stroke-width="0.95" stroke-linecap="round" stroke-linejoin="round"/></svg>
<svg style="position:absolute;left:382px;top:375px" width="14" height="14" viewBox="0 0 14 14"><rect width="14" height="14" rx="4.5" fill="#2b7019" fill-opacity="0.6"/><path d="M3.5 7.1l2.5 2.5 4.6-4.8" fill="none" stroke="#fff" stroke-width="0.95" stroke-linecap="round" stroke-linejoin="round"/></svg>
<svg style="position:absolute;left:400px;top:375px" width="14" height="14" viewBox="0 0 14 14"><rect width="14" height="14" rx="4.5" fill="#2b7019" fill-opacity="0.6"/><path d="M3.5 7.1l2.5 2.5 4.6-4.8" fill="none" stroke="#fff" stroke-width="0.95" stroke-linecap="round" stroke-linejoin="round"/></svg>
<svg style="position:absolute;left:418px;top:375px" width="14" height="14" viewBox="0 0 14 14"><rect width="14" height="14" rx="4.5" fill="#2b7019" fill-opacity="0.6"/><path d="M3.5 7.1l2.5 2.5 4.6-4.8" fill="none" stroke="#fff" stroke-width="0.95" stroke-linecap="round" stroke-linejoin="round"/></svg>
<svg style="position:absolute;left:436px;top:375px" width="14" height="14" viewBox="0 0 14 14"><rect width="14" height="14" rx="4.5" fill="#2b7019" fill-opacity="0.6"/><path d="M3.5 7.1l2.5 2.5 4.6-4.8" fill="none" stroke="#fff" stroke-width="0.95" stroke-linecap="round" stroke-linejoin="round"/></svg>
<svg style="position:absolute;left:454px;top:375px" width="14" height="14" viewBox="0 0 14 14"><rect width="14" height="14" rx="4.5" fill="#2b7019" fill-opacity="0.6"/><path d="M3.5 7.1l2.5 2.5 4.6-4.8" fill="none" stroke="#fff" stroke-width="0.95" stroke-linecap="round" stroke-linejoin="round"/></svg>
<svg style="position:absolute;left:472px;top:375px" width="14" height="14" viewBox="0 0 14 14"><rect width="14" height="14" rx="4.5" fill="#2b7019" fill-opacity="0.6"/><path d="M3.5 7.1l2.5 2.5 4.6-4.8" fill="none" stroke="#fff" stroke-width="0.95" stroke-linecap="round" stroke-linejoin="round"/></svg>
<svg style="position:absolute;left:490px;top:375px" width="14" height="14" viewBox="0 0 14 14"><rect width="14" height="14" rx="4.5" fill="#2b7019" fill-opacity="0.6"/><path d="M3.5 7.1l2.5 2.5 4.6-4.8" fill="none" stroke="#fff" stroke-width="0.95" stroke-linecap="round" stroke-linejoin="round"/></svg>
<svg style="position:absolute;left:508px;top:375px" width="14" height="14" viewBox="0 0 14 14"><rect width="14" height="14" rx="4.5" fill="#2b7019" fill-opacity="0.6"/><path d="M3.5 7.1l2.5 2.5 4.6-4.8" fill="none" stroke="#fff" stroke-width="0.95" stroke-linecap="round" stroke-linejoin="round"/></svg>
<svg style="position:absolute;left:526px;top:375px" width="14" height="14" viewBox="0 0 14 14"><rect width="14" height="14" rx="4.5" fill="#2b7019" fill-opacity="0.6"/><path d="M3.5 7.1l2.5 2.5 4.6-4.8" fill="none" stroke="#fff" stroke-width="0.95" stroke-linecap="round" stroke-linejoin="round"/></svg>
<div class="t" style="left:101px;top:395px;font-size:14px;line-height:14px;color:#202024;">chain_linear_t5</div>
<div style="position:absolute;left:93px;top:410px;width:257px;height:1px;background:#ededf0;"></div>
<svg style="position:absolute;left:364px;top:395px" width="14" height="14" viewBox="0 0 14 14"><rect width="14" height="14" rx="4.5" fill="#2b7019" fill-opacity="0.6"/><path d="M3.5 7.1l2.5 2.5 4.6-4.8" fill="none" stroke="#fff" stroke-width="0.95" stroke-linecap="round" stroke-linejoin="round"/></svg>
<svg style="position:absolute;left:382px;top:395px" width="14" height="14" viewBox="0 0 14 14"><rect width="14" height="14" rx="4.5" fill="#2b7019" fill-opacity="0.6"/><path d="M3.5 7.1l2.5 2.5 4.6-4.8" fill="none" stroke="#fff" stroke-width="0.95" stroke-linecap="round" stroke-linejoin="round"/></svg>
<svg style="position:absolute;left:400px;top:395px" width="14" height="14" viewBox="0 0 14 14"><rect width="14" height="14" rx="4.5" fill="#2b7019" fill-opacity="0.6"/><path d="M3.5 7.1l2.5 2.5 4.6-4.8" fill="none" stroke="#fff" stroke-width="0.95" stroke-linecap="round" stroke-linejoin="round"/></svg>
<svg style="position:absolute;left:418px;top:395px" width="14" height="14" viewBox="0 0 14 14"><rect width="14" height="14" rx="4.5" fill="#2b7019" fill-opacity="0.6"/><path d="M3.5 7.1l2.5 2.5 4.6-4.8" fill="none" stroke="#fff" stroke-width="0.95" stroke-linecap="round" stroke-linejoin="round"/></svg>
<svg style="position:absolute;left:436px;top:395px" width="14" height="14" viewBox="0 0 14 14"><rect width="14" height="14" rx="4.5" fill="#2b7019" fill-opacity="0.6"/><path d="M3.5 7.1l2.5 2.5 4.6-4.8" fill="none" stroke="#fff" stroke-width="0.95" stroke-linecap="round" stroke-linejoin="round"/></svg>
<svg style="position:absolute;left:454px;top:395px" width="14" height="14" viewBox="0 0 14 14"><rect width="14" height="14" rx="4.5" fill="#2b7019" fill-opacity="0.6"/><path d="M3.5 7.1l2.5 2.5 4.6-4.8" fill="none" stroke="#fff" stroke-width="0.95" stroke-linecap="round" stroke-linejoin="round"/></svg>
<svg style="position:absolute;left:472px;top:395px" width="14" height="14" viewBox="0 0 14 14"><rect width="14" height="14" rx="4.5" fill="#2b7019" fill-opacity="0.6"/><path d="M3.5 7.1l2.5 2.5 4.6-4.8" fill="none" stroke="#fff" stroke-width="0.95" stroke-linecap="round" stroke-linejoin="round"/></svg>
<svg style="position:absolute;left:490px;top:395px" width="14" height="14" viewBox="0 0 14 14"><rect width="14" height="14" rx="4.5" fill="#2b7019" fill-opacity="0.6"/><path d="M3.5 7.1l2.5 2.5 4.6-4.8" fill="none" stroke="#fff" stroke-width="0.95" stroke-linecap="round" stroke-linejoin="round"/></svg>
<svg style="position:absolute;left:508px;top:395px" width="14" height="14" viewBox="0 0 14 14"><rect width="14" height="14" rx="4.5" fill="#2b7019" fill-opacity="0.6"/><path d="M3.5 7.1l2.5 2.5 4.6-4.8" fill="none" stroke="#fff" stroke-width="0.95" stroke-linecap="round" stroke-linejoin="round"/></svg>
<svg style="position:absolute;left:526px;top:395px" width="14" height="14" viewBox="0 0 14 14"><rect width="14" height="14" rx="4.5" fill="#2b7019" fill-opacity="0.6"/><path d="M3.5 7.1l2.5 2.5 4.6-4.8" fill="none" stroke="#fff" stroke-width="0.95" stroke-linecap="round" stroke-linejoin="round"/></svg>
<div class="t" style="left:101px;top:415px;font-size:14px;line-height:14px;color:#202024;">chain_linear_t6</div>
<div style="position:absolute;left:93px;top:430px;width:257px;height:1px;background:#ededf0;"></div>
<svg style="position:absolute;left:364px;top:415px" width="14" height="14" viewBox="0 0 14 14"><rect width="14" height="14" rx="4.5" fill="#2b7019" fill-opacity="0.6"/><path d="M3.5 7.1l2.5 2.5 4.6-4.8" fill="none" stroke="#fff" stroke-width="0.95" stroke-linecap="round" stroke-linejoin="round"/></svg>
<svg style="position:absolute;left:382px;top:415px" width="14" height="14" viewBox="0 0 14 14"><rect width="14" height="14" rx="4.5" fill="#2b7019" fill-opacity="0.6"/><path d="M3.5 7.1l2.5 2.5 4.6-4.8" fill="none" stroke="#fff" stroke-width="0.95" stroke-linecap="round" stroke-linejoin="round"/></svg>
<svg style="position:absolute;left:400px;top:415px" width="14" height="14" viewBox="0 0 14 14"><rect width="14" height="14" rx="4.5" fill="#2b7019" fill-opacity="0.6"/><path d="M3.5 7.1l2.5 2.5 4.6-4.8" fill="none" stroke="#fff" stroke-width="0.95" stroke-linecap="round" stroke-linejoin="round"/></svg>
<svg style="position:absolute;left:418px;top:415px" width="14" height="14" viewBox="0 0 14 14"><rect width="14" height="14" rx="4.5" fill="#2b7019" fill-opacity="0.6"/><path d="M3.5 7.1l2.5 2.5 4.6-4.8" fill="none" stroke="#fff" stroke-width="0.95" stroke-linecap="round" stroke-linejoin="round"/></svg>
<svg style="position:absolute;left:436px;top:415px" width="14" height="14" viewBox="0 0 14 14"><rect width="14" height="14" rx="4.5" fill="#2b7019" fill-opacity="0.6"/><path d="M3.5 7.1l2.5 2.5 4.6-4.8" fill="none" stroke="#fff" stroke-width="0.95" stroke-linecap="round" stroke-linejoin="round"/></svg>
<svg style="position:absolute;left:454px;top:415px" width="14" height="14" viewBox="0 0 14 14"><rect width="14" height="14" rx="4.5" fill="#2b7019" fill-opacity="0.6"/><path d="M3.5 7.1l2.5 2.5 4.6-4.8" fill="none" stroke="#fff" stroke-width="0.95" stroke-linecap="round" stroke-linejoin="round"/></svg>
<svg style="position:absolute;left:472px;top:415px" width="14" height="14" viewBox="0 0 14 14"><rect width="14" height="14" rx="4.5" fill="#2b7019" fill-opacity="0.6"/><path d="M3.5 7.1l2.5 2.5 4.6-4.8" fill="none" stroke="#fff" stroke-width="0.95" stroke-linecap="round" stroke-linejoin="round"/></svg>
<svg style="position:absolute;left:490px;top:415px" width="14" height="14" viewBox="0 0 14 14"><rect width="14" height="14" rx="4.5" fill="#2b7019" fill-opacity="0.6"/><path d="M3.5 7.1l2.5 2.5 4.6-4.8" fill="none" stroke="#fff" stroke-width="0.95" stroke-linecap="round" stroke-linejoin="round"/></svg>
<svg style="position:absolute;left:508px;top:415px" width="14" height="14" viewBox="0 0 14 14"><rect width="14" height="14" rx="4.5" fill="#2b7019" fill-opacity="0.6"/><path d="M3.5 7.1l2.5 2.5 4.6-4.8" fill="none" stroke="#fff" stroke-width="0.95" stroke-linecap="round" stroke-linejoin="round"/></svg>
<svg style="position:absolute;left:526px;top:415px" width="14" height="14" viewBox="0 0 14 14"><rect width="14" height="14" rx="4.5" fill="#2b7019" fill-opacity="0.6"/><path d="M3.5 7.1l2.5 2.5 4.6-4.8" fill="none" stroke="#fff" stroke-width="0.95" stroke-linecap="round" stroke-linejoin="round"/></svg>
<div class="t" style="left:101px;top:435px;font-size:14px;line-height:14px;color:#202024;">chain_linear_t7</div>
<div style="position:absolute;left:93px;top:450px;width:257px;height:1px;background:#ededf0;"></div>
<svg style="position:absolute;left:364px;top:435px" width="14" height="14" viewBox="0 0 14 14"><rect width="14" height="14" rx="4.5" fill="#2b7019" fill-opacity="0.6"/><path d="M3.5 7.1l2.5 2.5 4.6-4.8" fill="none" stroke="#fff" stroke-width="0.95" stroke-linecap="round" stroke-linejoin="round"/></svg>
<svg style="position:absolute;left:382px;top:435px" width="14" height="14" viewBox="0 0 14 14"><rect width="14" height="14" rx="4.5" fill="#2b7019" fill-opacity="0.6"/><path d="M3.5 7.1l2.5 2.5 4.6-4.8" fill="none" stroke="#fff" stroke-width="0.95" stroke-linecap="round" stroke-linejoin="round"/></svg>
<svg style="position:absolute;left:400px;top:435px" width="14" height="14" viewBox="0 0 14 14"><rect width="14" height="14" rx="4.5" fill="#2b7019" fill-opacity="0.6"/><path d="M3.5 7.1l2.5 2.5 4.6-4.8" fill="none" stroke="#fff" stroke-width="0.95" stroke-linecap="round" stroke-linejoin="round"/></svg>
<svg style="position:absolute;left:418px;top:435px" width="14" height="14" viewBox="0 0 14 14"><rect width="14" height="14" rx="4.5" fill="#2b7019" fill-opacity="0.6"/><path d="M3.5 7.1l2.5 2.5 4.6-4.8" fill="none" stroke="#fff" stroke-width="0.95" stroke-linecap="round" stroke-linejoin="round"/></svg>
<svg style="position:absolute;left:436px;top:435px" width="14" height="14" viewBox="0 0 14 14"><rect width="14" height="14" rx="4.5" fill="#2b7019" fill-opacity="0.6"/><path d="M3.5 7.1l2.5 2.5 4.6-4.8" fill="none" stroke="#fff" stroke-width="0.95" stroke-linecap="round" stroke-linejoin="round"/></svg>
<svg style="position:absolute;left:454px;top:435px" width="14" height="14" viewBox="0 0 14 14"><rect width="14" height="14" rx="4.5" fill="#2b7019" fill-opacity="0.6"/><path d="M3.5 7.1l2.5 2.5 4.6-4.8" fill="none" stroke="#fff" stroke-width="0.95" stroke-linecap="round" stroke-linejoin="round"/></svg>
<svg style="position:absolute;left:472px;top:435px" width="14" height="14" viewBox="0 0 14 14"><rect width="14" height="14" rx="4.5" fill="#2b7019" fill-opacity="0.6"/><path d="M3.5 7.1l2.5 2.5 4.6-4.8" fill="none" stroke="#fff" stroke-width="0.95" stroke-linecap="round" stroke-linejoin="round"/></svg>
<svg style="position:absolute;left:490px;top:435px" width="14" height="14" viewBox="0 0 14 14"><rect width="14" height="14" rx="4.5" fill="#2b7019" fill-opacity="0.6"/><path d="M3.5 7.1l2.5 2.5 4.6-4.8" fill="none" stroke="#fff" stroke-width="0.95" stroke-linecap="round" stroke-linejoin="round"/></svg>
<svg style="position:absolute;left:508px;top:435px" width="14" height="14" viewBox="0 0 14 14"><rect width="14" height="14" rx="4.5" fill="#2b7019" fill-opacity="0.6"/><path d="M3.5 7.1l2.5 2.5 4.6-4.8" fill="none" stroke="#fff" stroke-width="0.95" stroke-linecap="round" stroke-linejoin="round"/></svg>
<svg style="position:absolute;left:526px;top:435px" width="14" height="14" viewBox="0 0 14 14"><rect width="14" height="14" rx="4.5" fill="#2b7019" fill-opacity="0.6"/><path d="M3.5 7.1l2.5 2.5 4.6-4.8" fill="none" stroke="#fff" stroke-width="0.95" stroke-linecap="round" stroke-linejoin="round"/></svg>
<div class="t" style="left:101px;top:455px;font-size:14px;line-height:14px;color:#202024;">chain_linear_t8</div>
<div style="position:absolute;left:93px;top:470px;width:257px;height:1px;background:#ededf0;"></div>
<svg style="position:absolute;left:364px;top:455px" width="14" height="14" viewBox="0 0 14 14"><rect width="14" height="14" rx="4.5" fill="#2b7019" fill-opacity="0.6"/><path d="M3.5 7.1l2.5 2.5 4.6-4.8" fill="none" stroke="#fff" stroke-width="0.95" stroke-linecap="round" stroke-linejoin="round"/></svg>
<svg style="position:absolute;left:382px;top:455px" width="14" height="14" viewBox="0 0 14 14"><rect width="14" height="14" rx="4.5" fill="#2b7019" fill-opacity="0.6"/><path d="M3.5 7.1l2.5 2.5 4.6-4.8" fill="none" stroke="#fff" stroke-width="0.95" stroke-linecap="round" stroke-linejoin="round"/></svg>
<svg style="position:absolute;left:400px;top:455px" width="14" height="14" viewBox="0 0 14 14"><rect width="14" height="14" rx="4.5" fill="#2b7019" fill-opacity="0.6"/><path d="M3.5 7.1l2.5 2.5 4.6-4.8" fill="none" stroke="#fff" stroke-width="0.95" stroke-linecap="round" stroke-linejoin="round"/></svg>
<svg style="position:absolute;left:418px;top:455px" width="14" height="14" viewBox="0 0 14 14"><rect width="14" height="14" rx="4.5" fill="#2b7019" fill-opacity="0.6"/><path d="M3.5 7.1l2.5 2.5 4.6-4.8" fill="none" stroke="#fff" stroke-width="0.95" stroke-linecap="round" stroke-linejoin="round"/></svg>
<svg style="position:absolute;left:436px;top:455px" width="14" height="14" viewBox="0 0 14 14"><rect width="14" height="14" rx="4.5" fill="#2b7019" fill-opacity="0.6"/><path d="M3.5 7.1l2.5 2.5 4.6-4.8" fill="none" stroke="#fff" stroke-width="0.95" stroke-linecap="round" stroke-linejoin="round"/></svg>
<svg style="position:absolute;left:454px;top:455px" width="14" height="14" viewBox="0 0 14 14"><rect width="14" height="14" rx="4.5" fill="#2b7019" fill-opacity="0.6"/><path d="M3.5 7.1l2.5 2.5 4.6-4.8" fill="none" stroke="#fff" stroke-width="0.95" stroke-linecap="round" stroke-linejoin="round"/></svg>
<svg style="position:absolute;left:472px;top:455px" width="14" height="14" viewBox="0 0 14 14"><rect width="14" height="14" rx="4.5" fill="#2b7019" fill-opacity="0.6"/><path d="M3.5 7.1l2.5 2.5 4.6-4.8" fill="none" stroke="#fff" stroke-width="0.95" stroke-linecap="round" stroke-linejoin="round"/></svg>
<svg style="position:absolute;left:490px;top:455px" width="14" height="14" viewBox="0 0 14 14"><rect width="14" height="14" rx="4.5" fill="#2b7019" fill-opacity="0.6"/><path d="M3.5 7.1l2.5 2.5 4.6-4.8" fill="none" stroke="#fff" stroke-width="0.95" stroke-linecap="round" stroke-linejoin="round"/></svg>
<svg style="position:absolute;left:508px;top:455px" width="14" height="14" viewBox="0 0 14 14"><rect width="14" height="14" rx="4.5" fill="#2b7019" fill-opacity="0.6"/><path d="M3.5 7.1l2.5 2.5 4.6-4.8" fill="none" stroke="#fff" stroke-width="0.95" stroke-linecap="round" stroke-linejoin="round"/></svg>
<svg style="position:absolute;left:526px;top:455px" width="14" height="14" viewBox="0 0 14 14"><rect width="14" height="14" rx="4.5" fill="#2b7019" fill-opacity="0.6"/><path d="M3.5 7.1l2.5 2.5 4.6-4.8" fill="none" stroke="#fff" stroke-width="0.95" stroke-linecap="round" stroke-linejoin="round"/></svg>
<div class="t" style="left:101px;top:475px;font-size:14px;line-height:14px;color:#202024;">chain_linear_t9</div>
<div style="position:absolute;left:93px;top:490px;width:257px;height:1px;background:#ededf0;"></div>
<svg style="position:absolute;left:364px;top:475px" width="14" height="14" viewBox="0 0 14 14"><rect width="14" height="14" rx="4.5" fill="#2b7019" fill-opacity="0.6"/><path d="M3.5 7.1l2.5 2.5 4.6-4.8" fill="none" stroke="#fff" stroke-width="0.95" stroke-linecap="round" stroke-linejoin="round"/></svg>
<svg style="position:absolute;left:382px;top:475px" width="14" height="14" viewBox="0 0 14 14"><rect width="14" height="14" rx="4.5" fill="#2b7019" fill-opacity="0.6"/><path d="M3.5 7.1l2.5 2.5 4.6-4.8" fill="none" stroke="#fff" stroke-width="0.95" stroke-linecap="round" stroke-linejoin="round"/></svg>
<svg style="position:absolute;left:400px;top:475px" width="14" height="14" viewBox="0 0 14 14"><rect width="14" height="14" rx="4.5" fill="#2b7019" fill-opacity="0.6"/><path d="M3.5 7.1l2.5 2.5 4.6-4.8" fill="none" stroke="#fff" stroke-width="0.95" stroke-linecap="round" stroke-linejoin="round"/></svg>
<svg style="position:absolute;left:418px;top:475px" width="14" height="14" viewBox="0 0 14 14"><rect width="14" height="14" rx="4.5" fill="#2b7019" fill-opacity="0.6"/><path d="M3.5 7.1l2.5 2.5 4.6-4.8" fill="none" stroke="#fff" stroke-width="0.95" stroke-linecap="round" stroke-linejoin="round"/></svg>
<svg style="position:absolute;left:436px;top:475px" width="14" height="14" viewBox="0 0 14 14"><rect width="14" height="14" rx="4.5" fill="#2b7019" fill-opacity="0.6"/><path d="M3.5 7.1l2.5 2.5 4.6-4.8" fill="none" stroke="#fff" stroke-width="0.95" stroke-linecap="round" stroke-linejoin="round"/></svg>
<svg style="position:absolute;left:454px;top:475px" width="14" height="14" viewBox="0 0 14 14"><rect width="14" height="14" rx="4.5" fill="#2b7019" fill-opacity="0.6"/><path d="M3.5 7.1l2.5 2.5 4.6-4.8" fill="none" stroke="#fff" stroke-width="0.95" stroke-linecap="round" stroke-linejoin="round"/></svg>
<svg style="position:absolute;left:472px;top:475px" width="14" height="14" viewBox="0 0 14 14"><rect width="14" height="14" rx="4.5" fill="#2b7019" fill-opacity="0.6"/><path d="M3.5 7.1l2.5 2.5 4.6-4.8" fill="none" stroke="#fff" stroke-width="0.95" stroke-linecap="round" stroke-linejoin="round"/></svg>
<svg style="position:absolute;left:490px;top:475px" width="14" height="14" viewBox="0 0 14 14"><rect width="14" height="14" rx="4.5" fill="#2b7019" fill-opacity="0.6"/><path d="M3.5 7.1l2.5 2.5 4.6-4.8" fill="none" stroke="#fff" stroke-width="0.95" stroke-linecap="round" stroke-linejoin="round"/></svg>
<svg style="position:absolute;left:508px;top:475px" width="14" height="14" viewBox="0 0 14 14"><rect width="14" height="14" rx="4.5" fill="#2b7019" fill-opacity="0.6"/><path d="M3.5 7.1l2.5 2.5 4.6-4.8" fill="none" stroke="#fff" stroke-width="0.95" stroke-linecap="round" stroke-linejoin="round"/></svg>
<svg style="position:absolute;left:526px;top:475px" width="14" height="14" viewBox="0 0 14 14"><rect width="14" height="14" rx="4.5" fill="#2b7019" fill-opacity="0.6"/><path d="M3.5 7.1l2.5 2.5 4.6-4.8" fill="none" stroke="#fff" stroke-width="0.95" stroke-linecap="round" stroke-linejoin="round"/></svg>
<div class="t" style="left:101px;top:495px;font-size:14px;line-height:14px;color:#202024;">chain_t10</div>
<div style="position:absolute;left:93px;top:510px;width:257px;height:1px;background:#ededf0;"></div>
<svg style="position:absolute;left:364px;top:495px" width="14" height="14" viewBox="0 0 14 14"><rect width="14" height="14" rx="4.5" fill="#2b7019" fill-opacity="0.6"/><path d="M3.5 7.1l2.5 2.5 4.6-4.8" fill="none" stroke="#fff" stroke-width="0.95" stroke-linecap="round" stroke-linejoin="round"/></svg>
<svg style="position:absolute;left:382px;top:495px" width="14" height="14" viewBox="0 0 14 14"><rect width="14" height="14" rx="4.5" fill="#2b7019" fill-opacity="0.6"/><path d="M3.5 7.1l2.5 2.5 4.6-4.8" fill="none" stroke="#fff" stroke-width="0.95" stroke-linecap="round" stroke-linejoin="round"/></svg>
<svg style="position:absolute;left:400px;top:495px" width="14" height="14" viewBox="0 0 14 14"><rect width="14" height="14" rx="4.5" fill="#2b7019" fill-opacity="0.6"/><path d="M3.5 7.1l2.5 2.5 4.6-4.8" fill="none" stroke="#fff" stroke-width="0.95" stroke-linecap="round" stroke-linejoin="round"/></svg>
<svg style="position:absolute;left:418px;top:495px" width="14" height="14" viewBox="0 0 14 14"><rect width="14" height="14" rx="4.5" fill="#2b7019" fill-opacity="0.6"/><path d="M3.5 7.1l2.5 2.5 4.6-4.8" fill="none" stroke="#fff" stroke-width="0.95" stroke-linecap="round" stroke-linejoin="round"/></svg>
<svg style="position:absolute;left:436px;top:495px" width="14" height="14" viewBox="0 0 14 14"><rect width="14" height="14" rx="4.5" fill="#2b7019" fill-opacity="0.6"/><path d="M3.5 7.1l2.5 2.5 4.6-4.8" fill="none" stroke="#fff" stroke-width="0.95" stroke-linecap="round" stroke-linejoin="round"/></svg>
<svg style="position:absolute;left:454px;top:495px" width="14" height="14" viewBox="0 0 14 14"><rect width="14" height="14" rx="4.5" fill="#2b7019" fill-opacity="0.6"/><path d="M3.5 7.1l2.5 2.5 4.6-4.8" fill="none" stroke="#fff" stroke-width="0.95" stroke-linecap="round" stroke-linejoin="round"/></svg>
<svg style="position:absolute;left:472px;top:495px" width="14" height="14" viewBox="0 0 14 14"><rect width="14" height="14" rx="4.5" fill="#2b7019" fill-opacity="0.6"/><path d="M3.5 7.1l2.5 2.5 4.6-4.8" fill="none" stroke="#fff" stroke-width="0.95" stroke-linecap="round" stroke-linejoin="round"/></svg>
<svg style="position:absolute;left:490px;top:495px" width="14" height="14" viewBox="0 0 14 14"><rect width="14" height="14" rx="4.5" fill="#2b7019" fill-opacity="0.6"/><path d="M3.5 7.1l2.5 2.5 4.6-4.8" fill="none" stroke="#fff" stroke-width="0.95" stroke-linecap="round" stroke-linejoin="round"/></svg>
<svg style="position:absolute;left:508px;top:495px" width="14" height="14" viewBox="0 0 14 14"><rect width="14" height="14" rx="4.5" fill="#2b7019" fill-opacity="0.6"/><path d="M3.5 7.1l2.5 2.5 4.6-4.8" fill="none" stroke="#fff" stroke-width="0.95" stroke-linecap="round" stroke-linejoin="round"/></svg>
<svg style="position:absolute;left:526px;top:495px" width="14" height="14" viewBox="0 0 14 14"><rect width="14" height="14" rx="4.5" fill="#2b7019" fill-opacity="0.6"/><path d="M3.5 7.1l2.5 2.5 4.6-4.8" fill="none" stroke="#fff" stroke-width="0.95" stroke-linecap="round" stroke-linejoin="round"/></svg>
<div class="t" style="left:101px;top:515px;font-size:14px;line-height:14px;color:#202024;">chain_t11</div>
<div style="position:absolute;left:93px;top:530px;width:257px;height:1px;background:#ededf0;"></div>
<svg style="position:absolute;left:364px;top:515px" width="14" height="14" viewBox="0 0 14 14"><rect width="14" height="14" rx="4.5" fill="#2b7019" fill-opacity="0.6"/><path d="M3.5 7.1l2.5 2.5 4.6-4.8" fill="none" stroke="#fff" stroke-width="0.95" stroke-linecap="round" stroke-linejoin="round"/></svg>
<svg style="position:absolute;left:382px;top:515px" width="14" height="14" viewBox="0 0 14 14"><rect width="14" height="14" rx="4.5" fill="#2b7019" fill-opacity="0.6"/><path d="M3.5 7.1l2.5 2.5 4.6-4.8" fill="none" stroke="#fff" stroke-width="0.95" stroke-linecap="round" stroke-linejoin="round"/></svg>
<svg style="position:absolute;left:400px;top:515px" width="14" height="14" viewBox="0 0 14 14"><rect width="14" height="14" rx="4.5" fill="#2b7019" fill-opacity="0.6"/><path d="M3.5 7.1l2.5 2.5 4.6-4.8" fill="none" stroke="#fff" stroke-width="0.95" stroke-linecap="round" stroke-linejoin="round"/></svg>
<svg style="position:absolute;left:418px;top:515px" width="14" height="14" viewBox="0 0 14 14"><rect width="14" height="14" rx="4.5" fill="#2b7019" fill-opacity="0.6"/><path d="M3.5 7.1l2.5 2.5 4.6-4.8" fill="none" stroke="#fff" stroke-width="0.95" stroke-linecap="round" stroke-linejoin="round"/></svg>
<svg style="position:absolute;left:436px;top:515px" width="14" height="14" viewBox="0 0 14 14"><rect width="14" height="14" rx="4.5" fill="#2b7019" fill-opacity="0.6"/><path d="M3.5 7.1l2.5 2.5 4.6-4.8" fill="none" stroke="#fff" stroke-width="0.95" stroke-linecap="round" stroke-linejoin="round"/></svg>
<svg style="position:absolute;left:454px;top:515px" width="14" height="14" viewBox="0 0 14 14"><rect width="14" height="14" rx="4.5" fill="#2b7019" fill-opacity="0.6"/><path d="M3.5 7.1l2.5 2.5 4.6-4.8" fill="none" stroke="#fff" stroke-width="0.95" stroke-linecap="round" stroke-linejoin="round"/></svg>
<svg style="position:absolute;left:472px;top:515px" width="14" height="14" viewBox="0 0 14 14"><rect width="14" height="14" rx="4.5" fill="#2b7019" fill-opacity="0.6"/><path d="M3.5 7.1l2.5 2.5 4.6-4.8" fill="none" stroke="#fff" stroke-width="0.95" stroke-linecap="round" stroke-linejoin="round"/></svg>
<svg style="position:absolute;left:490px;top:515px" width="14" height="14" viewBox="0 0 14 14"><rect width="14" height="14" rx="4.5" fill="#2b7019" fill-opacity="0.6"/><path d="M3.5 7.1l2.5 2.5 4.6-4.8" fill="none" stroke="#fff" stroke-width="0.95" stroke-linecap="round" stroke-linejoin="round"/></svg>
<svg style="position:absolute;left:508px;top:515px" width="14" height="14" viewBox="0 0 14 14"><rect width="14" height="14" rx="4.5" fill="#2b7019" fill-opacity="0.6"/><path d="M3.5 7.1l2.5 2.5 4.6-4.8" fill="none" stroke="#fff" stroke-width="0.95" stroke-linecap="round" stroke-linejoin="round"/></svg>
<svg style="position:absolute;left:526px;top:515px" width="14" height="14" viewBox="0 0 14 14"><rect width="14" height="14" rx="4.5" fill="#2b7019" fill-opacity="0.6"/><path d="M3.5 7.1l2.5 2.5 4.6-4.8" fill="none" stroke="#fff" stroke-width="0.95" stroke-linecap="round" stroke-linejoin="round"/></svg>
<div class="t" style="left:101px;top:535px;font-size:14px;line-height:14px;color:#202024;">empty_1</div>
<div style="position:absolute;left:93px;top:550px;width:257px;height:1px;background:#ededf0;"></div>
<svg style="position:absolute;left:364px;top:535px" width="14" height="14" viewBox="0 0 14 14"><rect width="14" height="14" rx="4.5" fill="#c9352a"/><path d="M4.6 4.6l4.8 4.8M9.4 4.6l-4.8 4.8" fill="none" stroke="#fff" stroke-width="1.3" stroke-linecap="round"/></svg>
<svg style="position:absolute;left:382px;top:535px" width="14" height="14" viewBox="0 0 14 14"><rect width="14" height="14" rx="4.5" fill="#2b7019" fill-opacity="0.6"/><path d="M3.5 7.1l2.5 2.5 4.6-4.8" fill="none" stroke="#fff" stroke-width="0.95" stroke-linecap="round" stroke-linejoin="round"/></svg>
<svg style="position:absolute;left:400px;top:535px" width="14" height="14" viewBox="0 0 14 14"><rect width="14" height="14" rx="4.5" fill="#c9352a"/><path d="M4.6 4.6l4.8 4.8M9.4 4.6l-4.8 4.8" fill="none" stroke="#fff" stroke-width="1.3" stroke-linecap="round"/></svg>
<svg style="position:absolute;left:418px;top:535px" width="14" height="14" viewBox="0 0 14 14"><rect width="14" height="14" rx="4.5" fill="#c9352a"/><path d="M4.6 4.6l4.8 4.8M9.4 4.6l-4.8 4.8" fill="none" stroke="#fff" stroke-width="1.3" stroke-linecap="round"/></svg>
<svg style="position:absolute;left:436px;top:535px" width="14" height="14" viewBox="0 0 14 14"><rect width="14" height="14" rx="4.5" fill="#c9352a"/><path d="M4.6 4.6l4.8 4.8M9.4 4.6l-4.8 4.8" fill="none" stroke="#fff" stroke-width="1.3" stroke-linecap="round"/></svg>
<svg style="position:absolute;left:454px;top:535px" width="14" height="14" viewBox="0 0 14 14"><rect width="14" height="14" rx="4.5" fill="#2b7019" fill-opacity="0.6"/><path d="M3.5 7.1l2.5 2.5 4.6-4.8" fill="none" stroke="#fff" stroke-width="0.95" stroke-linecap="round" stroke-linejoin="round"/></svg>
<svg style="position:absolute;left:472px;top:535px" width="14" height="14" viewBox="0 0 14 14"><rect width="14" height="14" rx="4.5" fill="#c9352a"/><path d="M4.6 4.6l4.8 4.8M9.4 4.6l-4.8 4.8" fill="none" stroke="#fff" stroke-width="1.3" stroke-linecap="round"/></svg>
<svg style="position:absolute;left:490px;top:535px" width="14" height="14" viewBox="0 0 14 14"><rect width="14" height="14" rx="4.5" fill="#2b7019" fill-opacity="0.6"/><path d="M3.5 7.1l2.5 2.5 4.6-4.8" fill="none" stroke="#fff" stroke-width="0.95" stroke-linecap="round" stroke-linejoin="round"/></svg>
<svg style="position:absolute;left:508px;top:535px" width="14" height="14" viewBox="0 0 14 14"><rect width="14" height="14" rx="4.5" fill="#2b7019" fill-opacity="0.6"/><path d="M3.5 7.1l2.5 2.5 4.6-4.8" fill="none" stroke="#fff" stroke-width="0.95" stroke-linecap="round" stroke-linejoin="round"/></svg>
<svg style="position:absolute;left:526px;top:535px" width="14" height="14" viewBox="0 0 14 14"><rect width="14" height="14" rx="4.5" fill="#2b7019" fill-opacity="0.6"/><path d="M3.5 7.1l2.5 2.5 4.6-4.8" fill="none" stroke="#fff" stroke-width="0.95" stroke-linecap="round" stroke-linejoin="round"/></svg>
<div class="t" style="left:101px;top:555px;font-size:14px;line-height:14px;color:#202024;">end_chain_linear</div>
<div style="position:absolute;left:93px;top:570px;width:257px;height:1px;background:#ededf0;"></div>
<svg style="position:absolute;left:364px;top:555px" width="14" height="14" viewBox="0 0 14 14"><rect width="14" height="14" rx="4.5" fill="#2b7019" fill-opacity="0.6"/><path d="M3.5 7.1l2.5 2.5 4.6-4.8" fill="none" stroke="#fff" stroke-width="0.95" stroke-linecap="round" stroke-linejoin="round"/></svg>
<svg style="position:absolute;left:382px;top:555px" width="14" height="14" viewBox="0 0 14 14"><rect width="14" height="14" rx="4.5" fill="#2b7019" fill-opacity="0.6"/><path d="M3.5 7.1l2.5 2.5 4.6-4.8" fill="none" stroke="#fff" stroke-width="0.95" stroke-linecap="round" stroke-linejoin="round"/></svg>
<svg style="position:absolute;left:400px;top:555px" width="14" height="14" viewBox="0 0 14 14"><rect width="14" height="14" rx="4.5" fill="#2b7019" fill-opacity="0.6"/><path d="M3.5 7.1l2.5 2.5 4.6-4.8" fill="none" stroke="#fff" stroke-width="0.95" stroke-linecap="round" stroke-linejoin="round"/></svg>
<svg style="position:absolute;left:418px;top:555px" width="14" height="14" viewBox="0 0 14 14"><rect width="14" height="14" rx="4.5" fill="#2b7019" fill-opacity="0.6"/><path d="M3.5 7.1l2.5 2.5 4.6-4.8" fill="none" stroke="#fff" stroke-width="0.95" stroke-linecap="round" stroke-linejoin="round"/></svg>
<svg style="position:absolute;left:436px;top:555px" width="14" height="14" viewBox="0 0 14 14"><rect width="14" height="14" rx="4.5" fill="#2b7019" fill-opacity="0.6"/><path d="M3.5 7.1l2.5 2.5 4.6-4.8" fill="none" stroke="#fff" stroke-width="0.95" stroke-linecap="round" stroke-linejoin="round"/></svg>
<svg style="position:absolute;left:454px;top:555px" width="14" height="14" viewBox="0 0 14 14"><rect width="14" height="14" rx="4.5" fill="#2b7019" fill-opacity="0.6"/><path d="M3.5 7.1l2.5 2.5 4.6-4.8" fill="none" stroke="#fff" stroke-width="0.95" stroke-linecap="round" stroke-linejoin="round"/></svg>
<svg style="position:absolute;left:472px;top:555px" width="14" height="14" viewBox="0 0 14 14"><rect width="14" height="14" rx="4.5" fill="#2b7019" fill-opacity="0.6"/><path d="M3.5 7.1l2.5 2.5 4.6-4.8" fill="none" stroke="#fff" stroke-width="0.95" stroke-linecap="round" stroke-linejoin="round"/></svg>
<svg style="position:absolute;left:490px;top:555px" width="14" height="14" viewBox="0 0 14 14"><rect width="14" height="14" rx="4.5" fill="#2b7019" fill-opacity="0.6"/><path d="M3.5 7.1l2.5 2.5 4.6-4.8" fill="none" stroke="#fff" stroke-width="0.95" stroke-linecap="round" stroke-linejoin="round"/></svg>
<svg style="position:absolute;left:508px;top:555px" width="14" height="14" viewBox="0 0 14 14"><rect width="14" height="14" rx="4.5" fill="#2b7019" fill-opacity="0.6"/><path d="M3.5 7.1l2.5 2.5 4.6-4.8" fill="none" stroke="#fff" stroke-width="0.95" stroke-linecap="round" stroke-linejoin="round"/></svg>
<svg style="position:absolute;left:526px;top:555px" width="14" height="14" viewBox="0 0 14 14"><rect width="14" height="14" rx="4.5" fill="#2b7019" fill-opacity="0.6"/><path d="M3.5 7.1l2.5 2.5 4.6-4.8" fill="none" stroke="#fff" stroke-width="0.95" stroke-linecap="round" stroke-linejoin="round"/></svg>
<div class="t" style="left:101px;top:575px;font-size:14px;line-height:14px;color:#202024;">chain_t12</div>
<div style="position:absolute;left:93px;top:590px;width:257px;height:1px;background:#ededf0;"></div>
<svg style="position:absolute;left:364px;top:575px" width="14" height="14" viewBox="0 0 14 14"><rect width="14" height="14" rx="4.5" fill="#d9581e"/><g fill="none" stroke="#fff" stroke-width="0.9"><circle cx="7" cy="7" r="4.6" stroke-dasharray="3 1.8"/><path d="M7 8.8V5.4M5.6 6.7L7 5.3l1.4 1.4" stroke-width="1"/></g></svg>
<svg style="position:absolute;left:382px;top:575px" width="14" height="14" viewBox="0 0 14 14"><rect width="14" height="14" rx="4.5" fill="#2b7019" fill-opacity="0.6"/><path d="M3.5 7.1l2.5 2.5 4.6-4.8" fill="none" stroke="#fff" stroke-width="0.95" stroke-linecap="round" stroke-linejoin="round"/></svg>
<svg style="position:absolute;left:400px;top:575px" width="14" height="14" viewBox="0 0 14 14"><rect width="14" height="14" rx="4.5" fill="#d9581e"/><g fill="none" stroke="#fff" stroke-width="0.9"><circle cx="7" cy="7" r="4.6" stroke-dasharray="3 1.8"/><path d="M7 8.8V5.4M5.6 6.7L7 5.3l1.4 1.4" stroke-width="1"/></g></svg>
<svg style="position:absolute;left:418px;top:575px" width="14" height="14" viewBox="0 0 14 14"><rect width="14" height="14" rx="4.5" fill="#d9581e"/><g fill="none" stroke="#fff" stroke-width="0.9"><circle cx="7" cy="7" r="4.6" stroke-dasharray="3 1.8"/><path d="M7 8.8V5.4M5.6 6.7L7 5.3l1.4 1.4" stroke-width="1"/></g></svg>
<svg style="position:absolute;left:436px;top:575px" width="14" height="14" viewBox="0 0 14 14"><rect width="14" height="14" rx="4.5" fill="#d9581e"/><g fill="none" stroke="#fff" stroke-width="0.9"><circle cx="7" cy="7" r="4.6" stroke-dasharray="3 1.8"/><path d="M7 8.8V5.4M5.6 6.7L7 5.3l1.4 1.4" stroke-width="1"/></g></svg>
<svg style="position:absolute;left:454px;top:575px" width="14" height="14" viewBox="0 0 14 14"><rect width="14" height="14" rx="4.5" fill="#2b7019" fill-opacity="0.6"/><path d="M3.5 7.1l2.5 2.5 4.6-4.8" fill="none" stroke="#fff" stroke-width="0.95" stroke-linecap="round" stroke-linejoin="round"/></svg>
<svg style="position:absolute;left:472px;top:575px" width="14" height="14" viewBox="0 0 14 14"><rect width="14" height="14" rx="4.5" fill="#d9581e"/><g fill="none" stroke="#fff" stroke-width="0.9"><circle cx="7" cy="7" r="4.6" stroke-dasharray="3 1.8"/><path d="M7 8.8V5.4M5.6 6.7L7 5.3l1.4 1.4" stroke-width="1"/></g></svg>
<svg style="position:absolute;left:490px;top:575px" width="14" height="14" viewBox="0 0 14 14"><rect width="14" height="14" rx="4.5" fill="#2b7019" fill-opacity="0.6"/><path d="M3.5 7.1l2.5 2.5 4.6-4.8" fill="none" stroke="#fff" stroke-width="0.95" stroke-linecap="round" stroke-linejoin="round"/></svg>
<svg style="position:absolute;left:508px;top:575px" width="14" height="14" viewBox="0 0 14 14"><rect width="14" height="14" rx="4.5" fill="#2b7019" fill-opacity="0.6"/><path d="M3.5 7.1l2.5 2.5 4.6-4.8" fill="none" stroke="#fff" stroke-width="0.95" stroke-linecap="round" stroke-linejoin="round"/></svg>
<svg style="position:absolute;left:526px;top:575px" width="14" height="14" viewBox="0 0 14 14"><rect width="14" height="14" rx="4.5" fill="#2b7019" fill-opacity="0.6"/><path d="M3.5 7.1l2.5 2.5 4.6-4.8" fill="none" stroke="#fff" stroke-width="0.95" stroke-linecap="round" stroke-linejoin="round"/></svg>
<div class="t" style="left:101px;top:595px;font-size:14px;line-height:14px;color:#202024;">chain_t13</div>
<div style="position:absolute;left:93px;top:610px;width:257px;height:1px;background:#ededf0;"></div>
<svg style="position:absolute;left:364px;top:595px" width="14" height="14" viewBox="0 0 14 14"><rect width="14" height="14" rx="4.5" fill="#d9581e"/><g fill="none" stroke="#fff" stroke-width="0.9"><circle cx="7" cy="7" r="4.6" stroke-dasharray="3 1.8"/><path d="M7 8.8V5.4M5.6 6.7L7 5.3l1.4 1.4" stroke-width="1"/></g></svg>
<svg style="position:absolute;left:382px;top:595px" width="14" height="14" viewBox="0 0 14 14"><rect width="14" height="14" rx="4.5" fill="#2b7019" fill-opacity="0.6"/><path d="M3.5 7.1l2.5 2.5 4.6-4.8" fill="none" stroke="#fff" stroke-width="0.95" stroke-linecap="round" stroke-linejoin="round"/></svg>
<svg style="position:absolute;left:400px;top:595px" width="14" height="14" viewBox="0 0 14 14"><rect width="14" height="14" rx="4.5" fill="#d9581e"/><g fill="none" stroke="#fff" stroke-width="0.9"><circle cx="7" cy="7" r="4.6" stroke-dasharray="3 1.8"/><path d="M7 8.8V5.4M5.6 6.7L7 5.3l1.4 1.4" stroke-width="1"/></g></svg>
<svg style="position:absolute;left:418px;top:595px" width="14" height="14" viewBox="0 0 14 14"><rect width="14" height="14" rx="4.5" fill="#d9581e"/><g fill="none" stroke="#fff" stroke-width="0.9"><circle cx="7" cy="7" r="4.6" stroke-dasharray="3 1.8"/><path d="M7 8.8V5.4M5.6 6.7L7 5.3l1.4 1.4" stroke-width="1"/></g></svg>
<svg style="position:absolute;left:436px;top:595px" width="14" height="14" viewBox="0 0 14 14"><rect width="14" height="14" rx="4.5" fill="#d9581e"/><g fill="none" stroke="#fff" stroke-width="0.9"><circle cx="7" cy="7" r="4.6" stroke-dasharray="3 1.8"/><path d="M7 8.8V5.4M5.6 6.7L7 5.3l1.4 1.4" stroke-width="1"/></g></svg>
<svg style="position:absolute;left:454px;top:595px" width="14" height="14" viewBox="0 0 14 14"><rect width="14" height="14" rx="4.5" fill="#2b7019" fill-opacity="0.6"/><path d="M3.5 7.1l2.5 2.5 4.6-4.8" fill="none" stroke="#fff" stroke-width="0.95" stroke-linecap="round" stroke-linejoin="round"/></svg>
<svg style="position:absolute;left:472px;top:595px" width="14" height="14" viewBox="0 0 14 14"><rect width="14" height="14" rx="4.5" fill="#d9581e"/><g fill="none" stroke="#fff" stroke-width="0.9"><circle cx="7" cy="7" r="4.6" stroke-dasharray="3 1.8"/><path d="M7 8.8V5.4M5.6 6.7L7 5.3l1.4 1.4" stroke-width="1"/></g></svg>
<svg style="position:absolute;left:490px;top:595px" width="14" height="14" viewBox="0 0 14 14"><rect width="14" height="14" rx="4.5" fill="#2b7019" fill-opacity="0.6"/><path d="M3.5 7.1l2.5 2.5 4.6-4.8" fill="none" stroke="#fff" stroke-width="0.95" stroke-linecap="round" stroke-linejoin="round"/></svg>
<svg style="position:absolute;left:508px;top:595px" width="14" height="14" viewBox="0 0 14 14"><rect width="14" height="14" rx="4.5" fill="#2b7019" fill-opacity="0.6"/><path d="M3.5 7.1l2.5 2.5 4.6-4.8" fill="none" stroke="#fff" stroke-width="0.95" stroke-linecap="round" stroke-linejoin="round"/></svg>
<svg style="position:absolute;left:526px;top:595px" width="14" height="14" viewBox="0 0 14 14"><rect width="14" height="14" rx="4.5" fill="#2b7019" fill-opacity="0.6"/><path d="M3.5 7.1l2.5 2.5 4.6-4.8" fill="none" stroke="#fff" stroke-width="0.95" stroke-linecap="round" stroke-linejoin="round"/></svg>
<div class="t" style="left:101px;top:615px;font-size:14px;line-height:14px;color:#202024;">chain_t14</div>
<div style="position:absolute;left:93px;top:630px;width:257px;height:1px;background:#ededf0;"></div>
<svg style="position:absolute;left:364px;top:615px" width="14" height="14" viewBox="0 0 14 14"><rect width="14" height="14" rx="4.5" fill="#d9581e"/><g fill="none" stroke="#fff" stroke-width="0.9"><circle cx="7" cy="7" r="4.6" stroke-dasharray="3 1.8"/><path d="M7 8.8V5.4M5.6 6.7L7 5.3l1.4 1.4" stroke-width="1"/></g></svg>
<svg style="position:absolute;left:382px;top:615px" width="14" height="14" viewBox="0 0 14 14"><rect width="14" height="14" rx="4.5" fill="#2b7019" fill-opacity="0.6"/><path d="M3.5 7.1l2.5 2.5 4.6-4.8" fill="none" stroke="#fff" stroke-width="0.95" stroke-linecap="round" stroke-linejoin="round"/></svg>
<svg style="position:absolute;left:400px;top:615px" width="14" height="14" viewBox="0 0 14 14"><rect width="14" height="14" rx="4.5" fill="#d9581e"/><g fill="none" stroke="#fff" stroke-width="0.9"><circle cx="7" cy="7" r="4.6" stroke-dasharray="3 1.8"/><path d="M7 8.8V5.4M5.6 6.7L7 5.3l1.4 1.4" stroke-width="1"/></g></svg>
<svg style="position:absolute;left:418px;top:615px" width="14" height="14" viewBox="0 0 14 14"><rect width="14" height="14" rx="4.5" fill="#d9581e"/><g fill="none" stroke="#fff" stroke-width="0.9"><circle cx="7" cy="7" r="4.6" stroke-dasharray="3 1.8"/><path d="M7 8.8V5.4M5.6 6.7L7 5.3l1.4 1.4" stroke-width="1"/></g></svg>
<svg style="position:absolute;left:436px;top:615px" width="14" height="14" viewBox="0 0 14 14"><rect width="14" height="14" rx="4.5" fill="#d9581e"/><g fill="none" stroke="#fff" stroke-width="0.9"><circle cx="7" cy="7" r="4.6" stroke-dasharray="3 1.8"/><path d="M7 8.8V5.4M5.6 6.7L7 5.3l1.4 1.4" stroke-width="1"/></g></svg>
<svg style="position:absolute;left:454px;top:615px" width="14" height="14" viewBox="0 0 14 14"><rect width="14" height="14" rx="4.5" fill="#2b7019" fill-opacity="0.6"/><path d="M3.5 7.1l2.5 2.5 4.6-4.8" fill="none" stroke="#fff" stroke-width="0.95" stroke-linecap="round" stroke-linejoin="round"/></svg>
<svg style="position:absolute;left:472px;top:615px" width="14" height="14" viewBox="0 0 14 14"><rect width="14" height="14" rx="4.5" fill="#d9581e"/><g fill="none" stroke="#fff" stroke-width="0.9"><circle cx="7" cy="7" r="4.6" stroke-dasharray="3 1.8"/><path d="M7 8.8V5.4M5.6 6.7L7 5.3l1.4 1.4" stroke-width="1"/></g></svg>
<svg style="position:absolute;left:490px;top:615px" width="14" height="14" viewBox="0 0 14 14"><rect width="14" height="14" rx="4.5" fill="#2b7019" fill-opacity="0.6"/><path d="M3.5 7.1l2.5 2.5 4.6-4.8" fill="none" stroke="#fff" stroke-width="0.95" stroke-linecap="round" stroke-linejoin="round"/></svg>
<svg style="position:absolute;left:508px;top:615px" width="14" height="14" viewBox="0 0 14 14"><rect width="14" height="14" rx="4.5" fill="#2b7019" fill-opacity="0.6"/><path d="M3.5 7.1l2.5 2.5 4.6-4.8" fill="none" stroke="#fff" stroke-width="0.95" stroke-linecap="round" stroke-linejoin="round"/></svg>
<svg style="position:absolute;left:526px;top:615px" width="14" height="14" viewBox="0 0 14 14"><rect width="14" height="14" rx="4.5" fill="#2b7019" fill-opacity="0.6"/><path d="M3.5 7.1l2.5 2.5 4.6-4.8" fill="none" stroke="#fff" stroke-width="0.95" stroke-linecap="round" stroke-linejoin="round"/></svg>
<div class="t" style="left:101px;top:635px;font-size:14px;line-height:14px;color:#202024;">chain_t15</div>
<div style="position:absolute;left:93px;top:650px;width:257px;height:1px;background:#ededf0;"></div>
<svg style="position:absolute;left:364px;top:635px" width="14" height="14" viewBox="0 0 14 14"><rect width="14" height="14" rx="4.5" fill="#d9581e"/><g fill="none" stroke="#fff" stroke-width="0.9"><circle cx="7" cy="7" r="4.6" stroke-dasharray="3 1.8"/><path d="M7 8.8V5.4M5.6 6.7L7 5.3l1.4 1.4" stroke-width="1"/></g></svg>
<svg style="position:absolute;left:382px;top:635px" width="14" height="14" viewBox="0 0 14 14"><rect width="14" height="14" rx="4.5" fill="#2b7019" fill-opacity="0.6"/><path d="M3.5 7.1l2.5 2.5 4.6-4.8" fill="none" stroke="#fff" stroke-width="0.95" stroke-linecap="round" stroke-linejoin="round"/></svg>
<svg style="position:absolute;left:400px;top:635px" width="14" height="14" viewBox="0 0 14 14"><rect width="14" height="14" rx="4.5" fill="#d9581e"/><g fill="none" stroke="#fff" stroke-width="0.9"><circle cx="7" cy="7" r="4.6" stroke-dasharray="3 1.8"/><path d="M7 8.8V5.4M5.6 6.7L7 5.3l1.4 1.4" stroke-width="1"/></g></svg>
<svg style="position:absolute;left:418px;top:635px" width="14" height="14" viewBox="0 0 14 14"><rect width="14" height="14" rx="4.5" fill="#d9581e"/><g fill="none" stroke="#fff" stroke-width="0.9"><circle cx="7" cy="7" r="4.6" stroke-dasharray="3 1.8"/><path d="M7 8.8V5.4M5.6 6.7L7 5.3l1.4 1.4" stroke-width="1"/></g></svg>
<svg style="position:absolute;left:436px;top:635px" width="14" height="14" viewBox="0 0 14 14"><rect width="14" height="14" rx="4.5" fill="#d9581e"/><g fill="none" stroke="#fff" stroke-width="0.9"><circle cx="7" cy="7" r="4.6" stroke-dasharray="3 1.8"/><path d="M7 8.8V5.4M5.6 6.7L7 5.3l1.4 1.4" stroke-width="1"/></g></svg>
<svg style="position:absolute;left:454px;top:635px" width="14" height="14" viewBox="0 0 14 14"><rect width="14" height="14" rx="4.5" fill="#2b7019" fill-opacity="0.6"/><path d="M3.5 7.1l2.5 2.5 4.6-4.8" fill="none" stroke="#fff" stroke-width="0.95" stroke-linecap="round" stroke-linejoin="round"/></svg>
<svg style="position:absolute;left:472px;top:635px" width="14" height="14" viewBox="0 0 14 14"><rect width="14" height="14" rx="4.5" fill="#d9581e"/><g fill="none" stroke="#fff" stroke-width="0.9"><circle cx="7" cy="7" r="4.6" stroke-dasharray="3 1.8"/><path d="M7 8.8V5.4M5.6 6.7L7 5.3l1.4 1.4" stroke-width="1"/></g></svg>
<svg style="position:absolute;left:490px;top:635px" width="14" height="14" viewBox="0 0 14 14"><rect width="14" height="14" rx="4.5" fill="#2b7019" fill-opacity="0.6"/><path d="M3.5 7.1l2.5 2.5 4.6-4.8" fill="none" stroke="#fff" stroke-width="0.95" stroke-linecap="round" stroke-linejoin="round"/></svg>
<svg style="position:absolute;left:508px;top:635px" width="14" height="14" viewBox="0 0 14 14"><rect width="14" height="14" rx="4.5" fill="#2b7019" fill-opacity="0.6"/><path d="M3.5 7.1l2.5 2.5 4.6-4.8" fill="none" stroke="#fff" stroke-width="0.95" stroke-linecap="round" stroke-linejoin="round"/></svg>
<svg style="position:absolute;left:526px;top:635px" width="14" height="14" viewBox="0 0 14 14"><rect width="14" height="14" rx="4.5" fill="#2b7019" fill-opacity="0.6"/><path d="M3.5 7.1l2.5 2.5 4.6-4.8" fill="none" stroke="#fff" stroke-width="0.95" stroke-linecap="round" stroke-linejoin="round"/></svg>
<div class="t" style="left:101px;top:655px;font-size:14px;line-height:14px;color:#202024;">chain_t16</div>
<div style="position:absolute;left:93px;top:670px;width:257px;height:1px;background:#ededf0;"></div>
<svg style="position:absolute;left:364px;top:655px" width="14" height="14" viewBox="0 0 14 14"><rect width="14" height="14" rx="4.5" fill="#d9581e"/><g fill="none" stroke="#fff" stroke-width="0.9"><circle cx="7" cy="7" r="4.6" stroke-dasharray="3 1.8"/><path d="M7 8.8V5.4M5.6 6.7L7 5.3l1.4 1.4" stroke-width="1"/></g></svg>
<svg style="position:absolute;left:382px;top:655px" width="14" height="14" viewBox="0 0 14 14"><rect width="14" height="14" rx="4.5" fill="#2b7019" fill-opacity="0.6"/><path d="M3.5 7.1l2.5 2.5 4.6-4.8" fill="none" stroke="#fff" stroke-width="0.95" stroke-linecap="round" stroke-linejoin="round"/></svg>
<svg style="position:absolute;left:400px;top:655px" width="14" height="14" viewBox="0 0 14 14"><rect width="14" height="14" rx="4.5" fill="#d9581e"/><g fill="none" stroke="#fff" stroke-width="0.9"><circle cx="7" cy="7" r="4.6" stroke-dasharray="3 1.8"/><path d="M7 8.8V5.4M5.6 6.7L7 5.3l1.4 1.4" stroke-width="1"/></g></svg>
<svg style="position:absolute;left:418px;top:655px" width="14" height="14" viewBox="0 0 14 14"><rect width="14" height="14" rx="4.5" fill="#d9581e"/><g fill="none" stroke="#fff" stroke-width="0.9"><circle cx="7" cy="7" r="4.6" stroke-dasharray="3 1.8"/><path d="M7 8.8V5.4M5.6 6.7L7 5.3l1.4 1.4" stroke-width="1"/></g></svg>
<svg style="position:absolute;left:436px;top:655px" width="14" height="14" viewBox="0 0 14 14"><rect width="14" height="14" rx="4.5" fill="#d9581e"/><g fill="none" stroke="#fff" stroke-width="0.9"><circle cx="7" cy="7" r="4.6" stroke-dasharray="3 1.8"/><path d="M7 8.8V5.4M5.6 6.7L7 5.3l1.4 1.4" stroke-width="1"/></g></svg>
<svg style="position:absolute;left:454px;top:655px" width="14" height="14" viewBox="0 0 14 14"><rect width="14" height="14" rx="4.5" fill="#2b7019" fill-opacity="0.6"/><path d="M3.5 7.1l2.5 2.5 4.6-4.8" fill="none" stroke="#fff" stroke-width="0.95" stroke-linecap="round" stroke-linejoin="round"/></svg>
<svg style="position:absolute;left:472px;top:655px" width="14" height="14" viewBox="0 0 14 14"><rect width="14" height="14" rx="4.5" fill="#d9581e"/><g fill="none" stroke="#fff" stroke-width="0.9"><circle cx="7" cy="7" r="4.6" stroke-dasharray="3 1.8"/><path d="M7 8.8V5.4M5.6 6.7L7 5.3l1.4 1.4" stroke-width="1"/></g></svg>
<svg style="position:absolute;left:490px;top:655px" width="14" height="14" viewBox="0 0 14 14"><rect width="14" height="14" rx="4.5" fill="#2b7019" fill-opacity="0.6"/><path d="M3.5 7.1l2.5 2.5 4.6-4.8" fill="none" stroke="#fff" stroke-width="0.95" stroke-linecap="round" stroke-linejoin="round"/></svg>
<svg style="position:absolute;left:508px;top:655px" width="14" height="14" viewBox="0 0 14 14"><rect width="14" height="14" rx="4.5" fill="#2b7019" fill-opacity="0.6"/><path d="M3.5 7.1l2.5 2.5 4.6-4.8" fill="none" stroke="#fff" stroke-width="0.95" stroke-linecap="round" stroke-linejoin="round"/></svg>
<svg style="position:absolute;left:526px;top:655px" width="14" height="14" viewBox="0 0 14 14"><rect width="14" height="14" rx="4.5" fill="#2b7019" fill-opacity="0.6"/><path d="M3.5 7.1l2.5 2.5 4.6-4.8" fill="none" stroke="#fff" stroke-width="0.95" stroke-linecap="round" stroke-linejoin="round"/></svg>
<div class="t" style="left:101px;top:675px;font-size:14px;line-height:14px;color:#202024;">chain_t17</div>
<div style="position:absolute;left:93px;top:690px;width:257px;height:1px;background:#ededf0;"></div>
<svg style="position:absolute;left:364px;top:675px" width="14" height="14" viewBox="0 0 14 14"><rect width="14" height="14" rx="4.5" fill="#d9581e"/><g fill="none" stroke="#fff" stroke-width="0.9"><circle cx="7" cy="7" r="4.6" stroke-dasharray="3 1.8"/><path d="M7 8.8V5.4M5.6 6.7L7 5.3l1.4 1.4" stroke-width="1"/></g></svg>
<svg style="position:absolute;left:382px;top:675px" width="14" height="14" viewBox="0 0 14 14"><rect width="14" height="14" rx="4.5" fill="#2b7019" fill-opacity="0.6"/><path d="M3.5 7.1l2.5 2.5 4.6-4.8" fill="none" stroke="#fff" stroke-width="0.95" stroke-linecap="round" stroke-linejoin="round"/></svg>
<svg style="position:absolute;left:400px;top:675px" width="14" height="14" viewBox="0 0 14 14"><rect width="14" height="14" rx="4.5" fill="#d9581e"/><g fill="none" stroke="#fff" stroke-width="0.9"><circle cx="7" cy="7" r="4.6" stroke-dasharray="3 1.8"/><path d="M7 8.8V5.4M5.6 6.7L7 5.3l1.4 1.4" stroke-width="1"/></g></svg>
<svg style="position:absolute;left:418px;top:675px" width="14" height="14" viewBox="0 0 14 14"><rect width="14" height="14" rx="4.5" fill="#d9581e"/><g fill="none" stroke="#fff" stroke-width="0.9"><circle cx="7" cy="7" r="4.6" stroke-dasharray="3 1.8"/><path d="M7 8.8V5.4M5.6 6.7L7 5.3l1.4 1.4" stroke-width="1"/></g></svg>
<svg style="position:absolute;left:436px;top:675px" width="14" height="14" viewBox="0 0 14 14"><rect width="14" height="14" rx="4.5" fill="#d9581e"/><g fill="none" stroke="#fff" stroke-width="0.9"><circle cx="7" cy="7" r="4.6" stroke-dasharray="3 1.8"/><path d="M7 8.8V5.4M5.6 6.7L7 5.3l1.4 1.4" stroke-width="1"/></g></svg>
<svg style="position:absolute;left:454px;top:675px" width="14" height="14" viewBox="0 0 14 14"><rect width="14" height="14" rx="4.5" fill="#2b7019" fill-opacity="0.6"/><path d="M3.5 7.1l2.5 2.5 4.6-4.8" fill="none" stroke="#fff" stroke-width="0.95" stroke-linecap="round" stroke-linejoin="round"/></svg>
<svg style="position:absolute;left:472px;top:675px" width="14" height="14" viewBox="0 0 14 14"><rect width="14" height="14" rx="4.5" fill="#d9581e"/><g fill="none" stroke="#fff" stroke-width="0.9"><circle cx="7" cy="7" r="4.6" stroke-dasharray="3 1.8"/><path d="M7 8.8V5.4M5.6 6.7L7 5.3l1.4 1.4" stroke-width="1"/></g></svg>
<svg style="position:absolute;left:490px;top:675px" width="14" height="14" viewBox="0 0 14 14"><rect width="14" height="14" rx="4.5" fill="#2b7019" fill-opacity="0.6"/><path d="M3.5 7.1l2.5 2.5 4.6-4.8" fill="none" stroke="#fff" stroke-width="0.95" stroke-linecap="round" stroke-linejoin="round"/></svg>
<svg style="position:absolute;left:508px;top:675px" width="14" height="14" viewBox="0 0 14 14"><rect width="14" height="14" rx="4.5" fill="#2b7019" fill-opacity="0.6"/><path d="M3.5 7.1l2.5 2.5 4.6-4.8" fill="none" stroke="#fff" stroke-width="0.95" stroke-linecap="round" stroke-linejoin="round"/></svg>
<svg style="position:absolute;left:526px;top:675px" width="14" height="14" viewBox="0 0 14 14"><rect width="14" height="14" rx="4.5" fill="#2b7019" fill-opacity="0.6"/><path d="M3.5 7.1l2.5 2.5 4.6-4.8" fill="none" stroke="#fff" stroke-width="0.95" stroke-linecap="round" stroke-linejoin="round"/></svg>
<div class="t" style="left:101px;top:695px;font-size:14px;line-height:14px;color:#202024;">empty_2</div>
<div style="position:absolute;left:93px;top:710px;width:257px;height:1px;background:#ededf0;"></div>
<svg style="position:absolute;left:364px;top:695px" width="14" height="14" viewBox="0 0 14 14"><rect width="14" height="14" rx="4.5" fill="#d9581e"/><g fill="none" stroke="#fff" stroke-width="0.9"><circle cx="7" cy="7" r="4.6" stroke-dasharray="3 1.8"/><path d="M7 8.8V5.4M5.6 6.7L7 5.3l1.4 1.4" stroke-width="1"/></g></svg>
<svg style="position:absolute;left:382px;top:695px" width="14" height="14" viewBox="0 0 14 14"><rect width="14" height="14" rx="4.5" fill="#2b7019" fill-opacity="0.6"/><path d="M3.5 7.1l2.5 2.5 4.6-4.8" fill="none" stroke="#fff" stroke-width="0.95" stroke-linecap="round" stroke-linejoin="round"/></svg>
<svg style="position:absolute;left:400px;top:695px" width="14" height="14" viewBox="0 0 14 14"><rect width="14" height="14" rx="4.5" fill="#d9581e"/><g fill="none" stroke="#fff" stroke-width="0.9"><circle cx="7" cy="7" r="4.6" stroke-dasharray="3 1.8"/><path d="M7 8.8V5.4M5.6 6.7L7 5.3l1.4 1.4" stroke-width="1"/></g></svg>
<svg style="position:absolute;left:418px;top:695px" width="14" height="14" viewBox="0 0 14 14"><rect width="14" height="14" rx="4.5" fill="#d9581e"/><g fill="none" stroke="#fff" stroke-width="0.9"><circle cx="7" cy="7" r="4.6" stroke-dasharray="3 1.8"/><path d="M7 8.8V5.4M5.6 6.7L7 5.3l1.4 1.4" stroke-width="1"/></g></svg>
<svg style="position:absolute;left:436px;top:695px" width="14" height="14" viewBox="0 0 14 14"><rect width="14" height="14" rx="4.5" fill="#d9581e"/><g fill="none" stroke="#fff" stroke-width="0.9"><circle cx="7" cy="7" r="4.6" stroke-dasharray="3 1.8"/><path d="M7 8.8V5.4M5.6 6.7L7 5.3l1.4 1.4" stroke-width="1"/></g></svg>
<svg style="position:absolute;left:454px;top:695px" width="14" height="14" viewBox="0 0 14 14"><rect width="14" height="14" rx="4.5" fill="#2b7019" fill-opacity="0.6"/><path d="M3.5 7.1l2.5 2.5 4.6-4.8" fill="none" stroke="#fff" stroke-width="0.95" stroke-linecap="round" stroke-linejoin="round"/></svg>
<svg style="position:absolute;left:472px;top:695px" width="14" height="14" viewBox="0 0 14 14"><rect width="14" height="14" rx="4.5" fill="#d9581e"/><g fill="none" stroke="#fff" stroke-width="0.9"><circle cx="7" cy="7" r="4.6" stroke-dasharray="3 1.8"/><path d="M7 8.8V5.4M5.6 6.7L7 5.3l1.4 1.4" stroke-width="1"/></g></svg>
<svg style="position:absolute;left:490px;top:695px" width="14" height="14" viewBox="0 0 14 14"><rect width="14" height="14" rx="4.5" fill="#2b7019" fill-opacity="0.6"/><path d="M3.5 7.1l2.5 2.5 4.6-4.8" fill="none" stroke="#fff" stroke-width="0.95" stroke-linecap="round" stroke-linejoin="round"/></svg>
<svg style="position:absolute;left:508px;top:695px" width="14" height="14" viewBox="0 0 14 14"><rect width="14" height="14" rx="4.5" fill="#2b7019" fill-opacity="0.6"/><path d="M3.5 7.1l2.5 2.5 4.6-4.8" fill="none" stroke="#fff" stroke-width="0.95" stroke-linecap="round" stroke-linejoin="round"/></svg>
<svg style="position:absolute;left:526px;top:695px" width="14" height="14" viewBox="0 0 14 14"><rect width="14" height="14" rx="4.5" fill="#2b7019" fill-opacity="0.6"/><path d="M3.5 7.1l2.5 2.5 4.6-4.8" fill="none" stroke="#fff" stroke-width="0.95" stroke-linecap="round" stroke-linejoin="round"/></svg>
<div class="t" style="left:101px;top:715px;font-size:14px;line-height:14px;color:#202024;">chain_t18</div>
<div style="position:absolute;left:93px;top:730px;width:257px;height:1px;background:#ededf0;"></div>
<svg style="position:absolute;left:364px;top:715px" width="14" height="14" viewBox="0 0 14 14"><rect width="14" height="14" rx="4.5" fill="#d9581e"/><g fill="none" stroke="#fff" stroke-width="0.9"><circle cx="7" cy="7" r="4.6" stroke-dasharray="3 1.8"/><path d="M7 8.8V5.4M5.6 6.7L7 5.3l1.4 1.4" stroke-width="1"/></g></svg>
<svg style="position:absolute;left:382px;top:715px" width="14" height="14" viewBox="0 0 14 14"><rect width="14" height="14" rx="4.5" fill="#2b7019" fill-opacity="0.6"/><path d="M3.5 7.1l2.5 2.5 4.6-4.8" fill="none" stroke="#fff" stroke-width="0.95" stroke-linecap="round" stroke-linejoin="round"/></svg>
<svg style="position:absolute;left:400px;top:715px" width="14" height="14" viewBox="0 0 14 14"><rect width="14" height="14" rx="4.5" fill="#d9581e"/><g fill="none" stroke="#fff" stroke-width="0.9"><circle cx="7" cy="7" r="4.6" stroke-dasharray="3 1.8"/><path d="M7 8.8V5.4M5.6 6.7L7 5.3l1.4 1.4" stroke-width="1"/></g></svg>
<svg style="position:absolute;left:418px;top:715px" width="14" height="14" viewBox="0 0 14 14"><rect width="14" height="14" rx="4.5" fill="#d9581e"/><g fill="none" stroke="#fff" stroke-width="0.9"><circle cx="7" cy="7" r="4.6" stroke-dasharray="3 1.8"/><path d="M7 8.8V5.4M5.6 6.7L7 5.3l1.4 1.4" stroke-width="1"/></g></svg>
<svg style="position:absolute;left:436px;top:715px" width="14" height="14" viewBox="0 0 14 14"><rect width="14" height="14" rx="4.5" fill="#d9581e"/><g fill="none" stroke="#fff" stroke-width="0.9"><circle cx="7" cy="7" r="4.6" stroke-dasharray="3 1.8"/><path d="M7 8.8V5.4M5.6 6.7L7 5.3l1.4 1.4" stroke-width="1"/></g></svg>
<svg style="position:absolute;left:454px;top:715px" width="14" height="14" viewBox="0 0 14 14"><rect width="14" height="14" rx="4.5" fill="#2b7019" fill-opacity="0.6"/><path d="M3.5 7.1l2.5 2.5 4.6-4.8" fill="none" stroke="#fff" stroke-width="0.95" stroke-linecap="round" stroke-linejoin="round"/></svg>
<svg style="position:absolute;left:472px;top:715px" width="14" height="14" viewBox="0 0 14 14"><rect width="14" height="14" rx="4.5" fill="#d9581e"/><g fill="none" stroke="#fff" stroke-width="0.9"><circle cx="7" cy="7" r="4.6" stroke-dasharray="3 1.8"/><path d="M7 8.8V5.4M5.6 6.7L7 5.3l1.4 1.4" stroke-width="1"/></g></svg>
<svg style="position:absolute;left:490px;top:715px" width="14" height="14" viewBox="0 0 14 14"><rect width="14" height="14" rx="4.5" fill="#2b7019" fill-opacity="0.6"/><path d="M3.5 7.1l2.5 2.5 4.6-4.8" fill="none" stroke="#fff" stroke-width="0.95" stroke-linecap="round" stroke-linejoin="round"/></svg>
<svg style="position:absolute;left:508px;top:715px" width="14" height="14" viewBox="0 0 14 14"><rect width="14" height="14" rx="4.5" fill="#2b7019" fill-opacity="0.6"/><path d="M3.5 7.1l2.5 2.5 4.6-4.8" fill="none" stroke="#fff" stroke-width="0.95" stroke-linecap="round" stroke-linejoin="round"/></svg>
<svg style="position:absolute;left:526px;top:715px" width="14" height="14" viewBox="0 0 14 14"><rect width="14" height="14" rx="4.5" fill="#2b7019" fill-opacity="0.6"/><path d="M3.5 7.1l2.5 2.5 4.6-4.8" fill="none" stroke="#fff" stroke-width="0.95" stroke-linecap="round" stroke-linejoin="round"/></svg>
<div class="t" style="left:101px;top:735px;font-size:14px;line-height:14px;color:#202024;">chain_t19</div>
<div style="position:absolute;left:93px;top:750px;width:257px;height:1px;background:#ededf0;"></div>
<svg style="position:absolute;left:364px;top:735px" width="14" height="14" viewBox="0 0 14 14"><rect width="14" height="14" rx="4.5" fill="#d9581e"/><g fill="none" stroke="#fff" stroke-width="0.9"><circle cx="7" cy="7" r="4.6" stroke-dasharray="3 1.8"/><path d="M7 8.8V5.4M5.6 6.7L7 5.3l1.4 1.4" stroke-width="1"/></g></svg>
<svg style="position:absolute;left:382px;top:735px" width="14" height="14" viewBox="0 0 14 14"><rect width="14" height="14" rx="4.5" fill="#2b7019" fill-opacity="0.6"/><path d="M3.5 7.1l2.5 2.5 4.6-4.8" fill="none" stroke="#fff" stroke-width="0.95" stroke-linecap="round" stroke-linejoin="round"/></svg>
<svg style="position:absolute;left:400px;top:735px" width="14" height="14" viewBox="0 0 14 14"><rect width="14" height="14" rx="4.5" fill="#d9581e"/><g fill="none" stroke="#fff" stroke-width="0.9"><circle cx="7" cy="7" r="4.6" stroke-dasharray="3 1.8"/><path d="M7 8.8V5.4M5.6 6.7L7 5.3l1.4 1.4" stroke-width="1"/></g></svg>
<svg style="position:absolute;left:418px;top:735px" width="14" height="14" viewBox="0 0 14 14"><rect width="14" height="14" rx="4.5" fill="#d9581e"/><g fill="none" stroke="#fff" stroke-width="0.9"><circle cx="7" cy="7" r="4.6" stroke-dasharray="3 1.8"/><path d="M7 8.8V5.4M5.6 6.7L7 5.3l1.4 1.4" stroke-width="1"/></g></svg>
<svg style="position:absolute;left:436px;top:735px" width="14" height="14" viewBox="0 0 14 14"><rect width="14" height="14" rx="4.5" fill="#d9581e"/><g fill="none" stroke="#fff" stroke-width="0.9"><circle cx="7" cy="7" r="4.6" stroke-dasharray="3 1.8"/><path d="M7 8.8V5.4M5.6 6.7L7 5.3l1.4 1.4" stroke-width="1"/></g></svg>
<svg style="position:absolute;left:454px;top:735px" width="14" height="14" viewBox="0 0 14 14"><rect width="14" height="14" rx="4.5" fill="#2b7019" fill-opacity="0.6"/><path d="M3.5 7.1l2.5 2.5 4.6-4.8" fill="none" stroke="#fff" stroke-width="0.95" stroke-linecap="round" stroke-linejoin="round"/></svg>
<svg style="position:absolute;left:472px;top:735px" width="14" height="14" viewBox="0 0 14 14"><rect width="14" height="14" rx="4.5" fill="#d9581e"/><g fill="none" stroke="#fff" stroke-width="0.9"><circle cx="7" cy="7" r="4.6" stroke-dasharray="3 1.8"/><path d="M7 8.8V5.4M5.6 6.7L7 5.3l1.4 1.4" stroke-width="1"/></g></svg>
<svg style="position:absolute;left:490px;top:735px" width="14" height="14" viewBox="0 0 14 14"><rect width="14" height="14" rx="4.5" fill="#2b7019" fill-opacity="0.6"/><path d="M3.5 7.1l2.5 2.5 4.6-4.8" fill="none" stroke="#fff" stroke-width="0.95" stroke-linecap="round" stroke-linejoin="round"/></svg>
<svg style="position:absolute;left:508px;top:735px" width="14" height="14" viewBox="0 0 14 14"><rect width="14" height="14" rx="4.5" fill="#2b7019" fill-opacity="0.6"/><path d="M3.5 7.1l2.5 2.5 4.6-4.8" fill="none" stroke="#fff" stroke-width="0.95" stroke-linecap="round" stroke-linejoin="round"/></svg>
<svg style="position:absolute;left:526px;top:735px" width="14" height="14" viewBox="0 0 14 14"><rect width="14" height="14" rx="4.5" fill="#2b7019" fill-opacity="0.6"/><path d="M3.5 7.1l2.5 2.5 4.6-4.8" fill="none" stroke="#fff" stroke-width="0.95" stroke-linecap="round" stroke-linejoin="round"/></svg>
<div class="t" style="left:101px;top:755px;font-size:14px;line-height:14px;color:#202024;">end_chain</div>
<div style="position:absolute;left:93px;top:770px;width:257px;height:1px;background:#ededf0;"></div>
<svg style="position:absolute;left:364px;top:755px" width="14" height="14" viewBox="0 0 14 14"><rect width="14" height="14" rx="4.5" fill="#d9581e"/><g fill="none" stroke="#fff" stroke-width="0.9"><circle cx="7" cy="7" r="4.6" stroke-dasharray="3 1.8"/><path d="M7 8.8V5.4M5.6 6.7L7 5.3l1.4 1.4" stroke-width="1"/></g></svg>
<svg style="position:absolute;left:382px;top:755px" width="14" height="14" viewBox="0 0 14 14"><rect width="14" height="14" rx="4.5" fill="#2b7019" fill-opacity="0.6"/><path d="M3.5 7.1l2.5 2.5 4.6-4.8" fill="none" stroke="#fff" stroke-width="0.95" stroke-linecap="round" stroke-linejoin="round"/></svg>
<svg style="position:absolute;left:400px;top:755px" width="14" height="14" viewBox="0 0 14 14"><rect width="14" height="14" rx="4.5" fill="#d9581e"/><g fill="none" stroke="#fff" stroke-width="0.9"><circle cx="7" cy="7" r="4.6" stroke-dasharray="3 1.8"/><path d="M7 8.8V5.4M5.6 6.7L7 5.3l1.4 1.4" stroke-width="1"/></g></svg>
<svg style="position:absolute;left:418px;top:755px" width="14" height="14" viewBox="0 0 14 14"><rect width="14" height="14" rx="4.5" fill="#d9581e"/><g fill="none" stroke="#fff" stroke-width="0.9"><circle cx="7" cy="7" r="4.6" stroke-dasharray="3 1.8"/><path d="M7 8.8V5.4M5.6 6.7L7 5.3l1.4 1.4" stroke-width="1"/></g></svg>
<svg style="position:absolute;left:436px;top:755px" width="14" height="14" viewBox="0 0 14 14"><rect width="14" height="14" rx="4.5" fill="#d9581e"/><g fill="none" stroke="#fff" stroke-width="0.9"><circle cx="7" cy="7" r="4.6" stroke-dasharray="3 1.8"/><path d="M7 8.8V5.4M5.6 6.7L7 5.3l1.4 1.4" stroke-width="1"/></g></svg>
<svg style="position:absolute;left:454px;top:755px" width="14" height="14" viewBox="0 0 14 14"><rect width="14" height="14" rx="4.5" fill="#2b7019" fill-opacity="0.6"/><path d="M3.5 7.1l2.5 2.5 4.6-4.8" fill="none" stroke="#fff" stroke-width="0.95" stroke-linecap="round" stroke-linejoin="round"/></svg>
<svg style="position:absolute;left:472px;top:755px" width="14" height="14" viewBox="0 0 14 14"><rect width="14" height="14" rx="4.5" fill="#d9581e"/><g fill="none" stroke="#fff" stroke-width="0.9"><circle cx="7" cy="7" r="4.6" stroke-dasharray="3 1.8"/><path d="M7 8.8V5.4M5.6 6.7L7 5.3l1.4 1.4" stroke-width="1"/></g></svg>
<svg style="position:absolute;left:490px;top:755px" width="14" height="14" viewBox="0 0 14 14"><rect width="14" height="14" rx="4.5" fill="#2b7019" fill-opacity="0.6"/><path d="M3.5 7.1l2.5 2.5 4.6-4.8" fill="none" stroke="#fff" stroke-width="0.95" stroke-linecap="round" stroke-linejoin="round"/></svg>
<svg style="position:absolute;left:508px;top:755px" width="14" height="14" viewBox="0 0 14 14"><rect width="14" height="14" rx="4.5" fill="#2b7019" fill-opacity="0.6"/><path d="M3.5 7.1l2.5 2.5 4.6-4.8" fill="none" stroke="#fff" stroke-width="0.95" stroke-linecap="round" stroke-linejoin="round"/></svg>
<svg style="position:absolute;left:526px;top:755px" width="14" height="14" viewBox="0 0 14 14"><rect width="14" height="14" rx="4.5" fill="#2b7019" fill-opacity="0.6"/><path d="M3.5 7.1l2.5 2.5 4.6-4.8" fill="none" stroke="#fff" stroke-width="0.95" stroke-linecap="round" stroke-linejoin="round"/></svg>
<div style="position:absolute;left:550px;top:61px;width:2px;height:1176px;background:#8a8a99;"></div>
<div style="position:absolute;left:560px;top:61px;width:1438px;height:132px;border:1px solid #e4e4e7;border-radius:8px;box-sizing:border-box;"></div>
<svg style="position:absolute;left:572px;top:81px;" width="15" height="17" viewBox="0 0 15 17"><g stroke="#18181b" stroke-width="2" stroke-linecap="round"><path d="M2 15.5v-4M7.3 15.5V8.5M12.6 15.5V2"/></g></svg>
<div class="t" style="left:597px;top:81px;font-size:18px;line-height:18px;color:#09090b;font-weight:700;letter-spacing:0.418px;">2025-04-21, 13:11:09</div>
<div style="position:absolute;left:796px;top:78px;width:70px;height:24px;background:#c9352a;border-radius:12px;"></div>
<svg style="position:absolute;left:804px;top:84px;" width="13" height="13" viewBox="0 0 13 13"><path d="M2.5 2.5l8 8M10.5 2.5l-8 8" fill="none" stroke="#fff" stroke-width="1.5" stroke-linecap="round"/></svg>
<div class="t" style="left:822px;top:83px;font-size:14px;line-height:14px;color:#fff;letter-spacing:0.422px;">failed</div>
<div style="position:absolute;left:1566px;top:70px;width:133px;height:40px;border:1px solid #e4e4e7;border-radius:6px;box-sizing:border-box;background:#fff;"></div>
<div class="t" style="left:1611px;top:83px;font-size:14px;line-height:14px;color:#18181b;letter-spacing:0.228px;">Add a note</div>
<svg style="position:absolute;left:1583px;top:80px;" width="19" height="20" viewBox="0 0 24 25"><path d="M21 15a2 2 0 0 1-2 2H7l-4 4V5a2 2 0 0 1 2-2h14a2 2 0 0 1 2 2z" fill="none" stroke="#18181b" stroke-width="2" stroke-linejoin="round"/></svg>
<div style="position:absolute;left:1703px;top:70px;width:126px;height:40px;border:1px solid #e4e4e7;border-radius:6px;box-sizing:border-box;background:#fff;"></div>
<div class="t" style="left:1748px;top:83px;font-size:14px;line-height:14px;color:#18181b;letter-spacing:0.053px;">Clear Run</div>
<svg style="position:absolute;left:1723px;top:83px;" width="14" height="14" viewBox="0 0 12 12"><path d="M8.7 2.78A4.2 4.2 0 1 0 9.22 8.7" fill="none" stroke="#18181b" stroke-width="1.3" stroke-linecap="round"/><path d="M11 0.6V5.2L6.6 4.3Z" fill="#18181b"/></svg>
<div style="position:absolute;left:1833px;top:70px;width:156px;height:40px;border:1px solid #e4e4e7;border-radius:6px;box-sizing:border-box;background:#fff;"></div>
<div class="t" style="left:1850px;top:83px;font-size:14px;line-height:14px;color:#18181b;letter-spacing:0.141px;">Mark Run as...</div>
<svg style="position:absolute;left:1956px;top:86px;" width="14" height="8" viewBox="0 0 14 8"><path d="M2 1.5h10L7 6.5z" fill="#18181b"/></svg>
<div class="t" style="left:569px;top:126px;font-size:13px;line-height:13px;color:#52525b;font-weight:700;letter-spacing:-0.466px;">Logical Date</div>
<div class="t" style="left:874px;top:126px;font-size:13px;line-height:13px;color:#52525b;font-weight:700;letter-spacing:-0.470px;">Run Type</div>
<div class="t" style="left:1100px;top:126px;font-size:13px;line-height:13px;color:#52525b;font-weight:700;letter-spacing:-0.124px;">Start</div>
<div class="t" style="left:1400px;top:126px;font-size:13px;line-height:13px;color:#52525b;font-weight:700;letter-spacing:-1.017px;">End</div>
<div class="t" style="left:1702px;top:126px;font-size:13px;line-height:13px;color:#52525b;font-weight:700;letter-spacing:-0.430px;">Duration</div>
<div class="t" style="left:1901.7px;top:126px;font-size:13px;line-height:13px;color:#52525b;font-weight:700;letter-spacing:-0.359px;">Dag Version(s)</div>
<div class="t" style="left:569px;top:157px;font-size:16px;line-height:16px;color:#18181b;letter-spacing:0.209px;">2025-04-21, 13:11:09</div>
<svg style="position:absolute;left:877px;top:158px;" width="10" height="12" viewBox="0 0 10 12"><path d="M1.5 1L9 6 1.5 11z" fill="#18181b"/></svg>
<div class="t" style="left:898px;top:157px;font-size:16px;line-height:16px;color:#18181b;letter-spacing:-0.079px;">manual</div>
<div class="t" style="left:1100px;top:157px;font-size:16px;line-height:16px;color:#18181b;letter-spacing:-0.007px;">2025-04-21, 13:11:11</div>
<div class="t" style="left:1400px;top:157px;font-size:16px;line-height:16px;color:#18181b;letter-spacing:-0.011px;">2025-04-21, 13:11:17</div>
<div class="t" style="left:1702px;top:157px;font-size:16px;line-height:16px;color:#18181b;letter-spacing:0.172px;">6.38s</div>
<div class="t" style="left:1901.7px;top:156px;font-size:14px;line-height:14px;color:#18181b;letter-spacing:-0.643px;">v1</div>
<div style="position:absolute;left:552px;top:237px;width:1445px;height:1px;background:#e4e4e7;"></div>
<div style="position:absolute;left:552px;top:236px;width:147px;height:2.5px;background:#3f6ef0;"></div>
<div class="t" style="left:568.5px;top:211px;font-size:16px;line-height:16px;color:#09090b;font-weight:700;letter-spacing:0.033px;">Task Instances</div>
<div class="t" style="left:715.5px;top:211px;font-size:16px;line-height:16px;color:#52525b;font-weight:700;letter-spacing:-0.245px;">Events</div>
<div class="t" style="left:799.7px;top:211px;font-size:16px;line-height:16px;color:#52525b;font-weight:700;letter-spacing:-0.175px;">Code</div>
<div class="t" style="left:872.4px;top:211px;font-size:16px;line-height:16px;color:#52525b;font-weight:700;letter-spacing:0.033px;">Details</div>
<div class="t" style="left:572px;top:280px;font-size:14px;line-height:14px;color:#18181b;letter-spacing:0.046px;">Task ID</div>
<div class="t" style="left:813px;top:280px;font-size:14px;line-height:14px;color:#18181b;letter-spacing:0.462px;">State</div>
<div class="t" style="left:977.7px;top:280px;font-size:14px;line-height:14px;color:#18181b;letter-spacing:0.397px;">Start Date</div>
<div class="t" style="left:1132.4px;top:280px;font-size:14px;line-height:14px;color:#18181b;letter-spacing:0.104px;">End Date</div>
<div class="t" style="left:1280.2px;top:280px;font-size:14px;line-height:14px;color:#18181b;letter-spacing:0.292px;">Map Index</div>
<div class="t" style="left:1417.4px;top:280px;font-size:14px;line-height:14px;color:#18181b;letter-spacing:0.402px;">Try Number</div>
<div class="t" style="left:1519px;top:280px;font-size:14px;line-height:14px;color:#18181b;letter-spacing:0.469px;">Operator</div>
<div class="t" style="left:1722px;top:280px;font-size:14px;line-height:14px;color:#18181b;letter-spacing:0.385px;">Duration</div>
<div class="t" style="left:1802.5px;top:280px;font-size:14px;line-height:14px;color:#18181b;letter-spacing:0.276px;">Dag Version</div>
<svg style="position:absolute;left:860px;top:280px;" width="12" height="14" viewBox="0 0 12 14"><g fill="#18181b"><path d="M6 0.5L11.5 6H0.5z"/><path d="M6 13.5L11.5 8H0.5z"/></g></svg>
<svg style="position:absolute;left:1057px;top:280px;" width="12" height="14" viewBox="0 0 12 14"><g fill="#18181b"><path d="M6 0.5L11.5 6H0.5z"/><path d="M6 13.5L11.5 8H0.5z"/></g></svg>
<svg style="position:absolute;left:1204px;top:280px;" width="12" height="14" viewBox="0 0 12 14"><g fill="#18181b"><path d="M6 0.5L11.5 6H0.5z"/><path d="M6 13.5L11.5 8H0.5z"/></g></svg>
<svg style="position:absolute;left:1360px;top:280px;" width="12" height="14" viewBox="0 0 12 14"><g fill="#18181b"><path d="M6 0.5L11.5 6H0.5z"/><path d="M6 13.5L11.5 8H0.5z"/></g></svg>
<svg style="position:absolute;left:1922px;top:281px;" width="16" height="12" viewBox="0 0 16 12"><g stroke="#18181b" stroke-width="1.5" stroke-linecap="round"><path d="M1 1.5h14M3.5 6h9M6.8 10.5h2.4"/></g></svg>
<div style="position:absolute;left:560px;top:323px;width:1430px;height:1px;background:#e4e4e7;"></div>
<div style="position:absolute;left:560px;top:324px;width:1430px;height:64px;background:#f2f2f2;"></div>
<div style="position:absolute;left:560px;top:388px;width:1430px;height:1px;background:#e4e4e7;"></div>
<div class="t" style="left:572px;top:349px;font-size:14px;line-height:14px;color:#3b55e6;font-weight:700;letter-spacing:0.286px;">end_chain_linear</div>
<div style="position:absolute;left:796px;top:344px;width:88px;height:24px;background:#2b7019;border-radius:12px;"></div>
<svg style="position:absolute;left:805px;top:350px;" width="12" height="12" viewBox="0 0 12 12"><path d="M1.5 6.2l3 3 6-6.5" fill="none" stroke="#fff" stroke-width="1.5" stroke-linecap="round" stroke-linejoin="round"/></svg>
<div class="t" style="left:822px;top:349px;font-size:14px;line-height:14px;color:#fff;letter-spacing:0.418px;">success</div>
<div class="t" style="left:961.6px;top:339px;font-size:14px;line-height:14px;color:#18181b;letter-spacing:0.836px;">2025-04-21,</div>
<div class="t" style="left:961.6px;top:359px;font-size:14px;line-height:14px;color:#18181b;letter-spacing:0.443px;">13:11:16</div>
<div class="t" style="left:1115.7px;top:339px;font-size:14px;line-height:14px;color:#18181b;letter-spacing:0.836px;">2025-04-21,</div>
<div class="t" style="left:1115.7px;top:359px;font-size:14px;line-height:14px;color:#18181b;letter-spacing:0.443px;">13:11:16</div>
<div class="t" style="left:1418px;top:349px;font-size:14px;line-height:14px;color:#18181b;">1</div>
<div class="t" style="left:1519px;top:349px;font-size:14px;line-height:14px;color:#18181b;letter-spacing:0.324px;">_PythonDecoratedOperator</div>
<div class="t" style="left:1722px;top:349px;font-size:14px;line-height:14px;color:#18181b;letter-spacing:0.550px;">0.13s</div>
<div class="t" style="left:1802.5px;top:349px;font-size:14px;line-height:14px;color:#18181b;letter-spacing:-0.143px;">v1</div>
<svg style="position:absolute;left:1918px;top:350px;" width="12" height="12" viewBox="0 0 12 12"><path d="M8.7 2.78A4.2 4.2 0 1 0 9.22 8.7" fill="none" stroke="#22339a" stroke-width="1.5" stroke-linecap="round"/><path d="M11 0.6V5.2L6.6 4.3Z" fill="#22339a"/></svg>
<svg style="position:absolute;left:1956px;top:354px;" width="8" height="6" viewBox="0 0 8 6"><path d="M0.5 1h7L4 5z" fill="#22339a"/></svg>
<div style="position:absolute;left:560px;top:453px;width:1430px;height:1px;background:#e4e4e7;"></div>
<div class="t" style="left:572px;top:414px;font-size:14px;line-height:14px;color:#3b55e6;font-weight:700;letter-spacing:0.308px;">end_chain</div>
<div style="position:absolute;left:796px;top:409px;width:141px;height:24px;background:#d9581e;border-radius:12px;"></div>
<svg style="position:absolute;left:804px;top:414px;" width="14" height="14" viewBox="0 0 14 14"><g fill="none" stroke="#fff" stroke-width="1.3"><circle cx="7" cy="7" r="5.6" stroke-dasharray="2.6 1.4"/><path d="M7 10V4.3M4.6 6.4L7 4l2.4 2.4" stroke-linecap="round" stroke-linejoin="round"/></g></svg>
<div class="t" style="left:822px;top:414px;font-size:14px;line-height:14px;color:#fff;letter-spacing:0.493px;">upstream_failed</div>
<div class="t" style="left:961.6px;top:404px;font-size:14px;line-height:14px;color:#18181b;letter-spacing:0.836px;">2025-04-21,</div>
<div class="t" style="left:961.6px;top:424px;font-size:14px;line-height:14px;color:#18181b;letter-spacing:0.443px;">13:11:16</div>
<div class="t" style="left:1115.7px;top:404px;font-size:14px;line-height:14px;color:#18181b;letter-spacing:0.836px;">2025-04-21,</div>
<div class="t" style="left:1115.7px;top:424px;font-size:14px;line-height:14px;color:#18181b;letter-spacing:0.443px;">13:11:16</div>
<div class="t" style="left:1418px;top:414px;font-size:14px;line-height:14px;color:#18181b;">0</div>
<div class="t" style="left:1519px;top:414px;font-size:14px;line-height:14px;color:#18181b;letter-spacing:0.324px;">_PythonDecoratedOperator</div>
<div class="t" style="left:1722px;top:414px;font-size:14px;line-height:14px;color:#18181b;letter-spacing:0.550px;">0.00s</div>
<div class="t" style="left:1802.5px;top:414px;font-size:14px;line-height:14px;color:#18181b;letter-spacing:-0.143px;">v1</div>
<svg style="position:absolute;left:1918px;top:415px;" width="12" height="12" viewBox="0 0 12 12"><path d="M8.7 2.78A4.2 4.2 0 1 0 9.22 8.7" fill="none" stroke="#22339a" stroke-width="1.5" stroke-linecap="round"/><path d="M11 0.6V5.2L6.6 4.3Z" fill="#22339a"/></svg>
<svg style="position:absolute;left:1956px;top:419px;" width="8" height="6" viewBox="0 0 8 6"><path d="M0.5 1h7L4 5z" fill="#22339a"/></svg>
<div style="position:absolute;left:560px;top:454px;width:1430px;height:64px;background:#f2f2f2;"></div>
<div style="position:absolute;left:560px;top:518px;width:1430px;height:1px;background:#e4e4e7;"></div>
<div class="t" style="left:572px;top:479px;font-size:14px;line-height:14px;color:#3b55e6;font-weight:700;letter-spacing:0.287px;">chain_t19</div>
<div style="position:absolute;left:796px;top:474px;width:141px;height:24px;background:#d9581e;border-radius:12px;"></div>
<svg style="position:absolute;left:804px;top:479px;" width="14" height="14" viewBox="0 0 14 14"><g fill="none" stroke="#fff" stroke-width="1.3"><circle cx="7" cy="7" r="5.6" stroke-dasharray="2.6 1.4"/><path d="M7 10V4.3M4.6 6.4L7 4l2.4 2.4" stroke-linecap="round" stroke-linejoin="round"/></g></svg>
<div class="t" style="left:822px;top:479px;font-size:14px;line-height:14px;color:#fff;letter-spacing:0.493px;">upstream_failed</div>
<div class="t" style="left:961.6px;top:469px;font-size:14px;line-height:14px;color:#18181b;letter-spacing:0.836px;">2025-04-21,</div>
<div class="t" style="left:961.6px;top:489px;font-size:14px;line-height:14px;color:#18181b;letter-spacing:0.443px;">13:11:15</div>
<div class="t" style="left:1115.7px;top:469px;font-size:14px;line-height:14px;color:#18181b;letter-spacing:0.836px;">2025-04-21,</div>
<div class="t" style="left:1115.7px;top:489px;font-size:14px;line-height:14px;color:#18181b;letter-spacing:0.443px;">13:11:15</div>
<div class="t" style="left:1418px;top:479px;font-size:14px;line-height:14px;color:#18181b;">0</div>
<div class="t" style="left:1519px;top:479px;font-size:14px;line-height:14px;color:#18181b;letter-spacing:0.324px;">_PythonDecoratedOperator</div>
<div class="t" style="left:1722px;top:479px;font-size:14px;line-height:14px;color:#18181b;letter-spacing:0.550px;">0.00s</div>
<div class="t" style="left:1802.5px;top:479px;font-size:14px;line-height:14px;color:#18181b;letter-spacing:-0.143px;">v1</div>
<svg style="position:absolute;left:1918px;top:480px;" width="12" height="12" viewBox="0 0 12 12"><path d="M8.7 2.78A4.2 4.2 0 1 0 9.22 8.7" fill="none" stroke="#22339a" stroke-width="1.5" stroke-linecap="round"/><path d="M11 0.6V5.2L6.6 4.3Z" fill="#22339a"/></svg>
<svg style="position:absolute;left:1956px;top:484px;" width="8" height="6" viewBox="0 0 8 6"><path d="M0.5 1h7L4 5z" fill="#22339a"/></svg>
<div style="position:absolute;left:560px;top:583px;width:1430px;height:1px;background:#e4e4e7;"></div>
<div class="t" style="left:572px;top:544px;font-size:14px;line-height:14px;color:#3b55e6;font-weight:700;letter-spacing:0.287px;">chain_t18</div>
<div style="position:absolute;left:796px;top:539px;width:141px;height:24px;background:#d9581e;border-radius:12px;"></div>
<svg style="position:absolute;left:804px;top:544px;" width="14" height="14" viewBox="0 0 14 14"><g fill="none" stroke="#fff" stroke-width="1.3"><circle cx="7" cy="7" r="5.6" stroke-dasharray="2.6 1.4"/><path d="M7 10V4.3M4.6 6.4L7 4l2.4 2.4" stroke-linecap="round" stroke-linejoin="round"/></g></svg>
<div class="t" style="left:822px;top:544px;font-size:14px;line-height:14px;color:#fff;letter-spacing:0.493px;">upstream_failed</div>
<div class="t" style="left:961.6px;top:534px;font-size:14px;line-height:14px;color:#18181b;letter-spacing:0.836px;">2025-04-21,</div>
<div class="t" style="left:961.6px;top:554px;font-size:14px;line-height:14px;color:#18181b;letter-spacing:0.443px;">13:11:15</div>
<div class="t" style="left:1115.7px;top:534px;font-size:14px;line-height:14px;color:#18181b;letter-spacing:0.836px;">2025-04-21,</div>
<div class="t" style="left:1115.7px;top:554px;font-size:14px;line-height:14px;color:#18181b;letter-spacing:0.443px;">13:11:15</div>
<div class="t" style="left:1418px;top:544px;font-size:14px;line-height:14px;color:#18181b;">0</div>
<div class="t" style="left:1519px;top:544px;font-size:14px;line-height:14px;color:#18181b;letter-spacing:0.324px;">_PythonDecoratedOperator</div>
<div class="t" style="left:1722px;top:544px;font-size:14px;line-height:14px;color:#18181b;letter-spacing:0.550px;">0.00s</div>
<div class="t" style="left:1802.5px;top:544px;font-size:14px;line-height:14px;color:#18181b;letter-spacing:-0.143px;">v1</div>
<svg style="position:absolute;left:1918px;top:545px;" width="12" height="12" viewBox="0 0 12 12"><path d="M8.7 2.78A4.2 4.2 0 1 0 9.22 8.7" fill="none" stroke="#22339a" stroke-width="1.5" stroke-linecap="round"/><path d="M11 0.6V5.2L6.6 4.3Z" fill="#22339a"/></svg>
<svg style="position:absolute;left:1956px;top:549px;" width="8" height="6" viewBox="0 0 8 6"><path d="M0.5 1h7L4 5z" fill="#22339a"/></svg>
<div style="position:absolute;left:560px;top:584px;width:1430px;height:64px;background:#f2f2f2;"></div>
<div style="position:absolute;left:560px;top:648px;width:1430px;height:1px;background:#e4e4e7;"></div>
<div class="t" style="left:572px;top:609px;font-size:14px;line-height:14px;color:#3b55e6;font-weight:700;letter-spacing:0.272px;">chain_linear_t8</div>
<div style="position:absolute;left:796px;top:604px;width:88px;height:24px;background:#2b7019;border-radius:12px;"></div>
<svg style="position:absolute;left:805px;top:610px;" width="12" height="12" viewBox="0 0 12 12"><path d="M1.5 6.2l3 3 6-6.5" fill="none" stroke="#fff" stroke-width="1.5" stroke-linecap="round" stroke-linejoin="round"/></svg>
<div class="t" style="left:822px;top:609px;font-size:14px;line-height:14px;color:#fff;letter-spacing:0.418px;">success</div>
<div class="t" style="left:961.6px;top:599px;font-size:14px;line-height:14px;color:#18181b;letter-spacing:0.836px;">2025-04-21,</div>
<div class="t" style="left:961.6px;top:619px;font-size:14px;line-height:14px;color:#18181b;letter-spacing:0.443px;">13:11:15</div>
<div class="t" style="left:1115.7px;top:599px;font-size:14px;line-height:14px;color:#18181b;letter-spacing:0.836px;">2025-04-21,</div>
<div class="t" style="left:1115.7px;top:619px;font-size:14px;line-height:14px;color:#18181b;letter-spacing:0.443px;">13:11:15</div>
<div class="t" style="left:1418px;top:609px;font-size:14px;line-height:14px;color:#18181b;">1</div>
<div class="t" style="left:1519px;top:609px;font-size:14px;line-height:14px;color:#18181b;letter-spacing:0.324px;">_PythonDecoratedOperator</div>
<div class="t" style="left:1722px;top:609px;font-size:14px;line-height:14px;color:#18181b;letter-spacing:0.550px;">0.16s</div>
<div class="t" style="left:1802.5px;top:609px;font-size:14px;line-height:14px;color:#18181b;letter-spacing:-0.143px;">v1</div>
<svg style="position:absolute;left:1918px;top:610px;" width="12" height="12" viewBox="0 0 12 12"><path d="M8.7 2.78A4.2 4.2 0 1 0 9.22 8.7" fill="none" stroke="#22339a" stroke-width="1.5" stroke-linecap="round"/><path d="M11 0.6V5.2L6.6 4.3Z" fill="#22339a"/></svg>
<svg style="position:absolute;left:1956px;top:614px;" width="8" height="6" viewBox="0 0 8 6"><path d="M0.5 1h7L4 5z" fill="#22339a"/></svg>
<div style="position:absolute;left:560px;top:713px;width:1430px;height:1px;background:#e4e4e7;"></div>
<div class="t" style="left:572px;top:674px;font-size:14px;line-height:14px;color:#3b55e6;font-weight:700;letter-spacing:0.272px;">chain_linear_t9</div>
<div style="position:absolute;left:796px;top:669px;width:88px;height:24px;background:#2b7019;border-radius:12px;"></div>
<svg style="position:absolute;left:805px;top:675px;" width="12" height="12" viewBox="0 0 12 12"><path d="M1.5 6.2l3 3 6-6.5" fill="none" stroke="#fff" stroke-width="1.5" stroke-linecap="round" stroke-linejoin="round"/></svg>
<div class="t" style="left:822px;top:674px;font-size:14px;line-height:14px;color:#fff;letter-spacing:0.418px;">success</div>
<div class="t" style="left:961.6px;top:664px;font-size:14px;line-height:14px;color:#18181b;letter-spacing:0.836px;">2025-04-21,</div>
<div class="t" style="left:961.6px;top:684px;font-size:14px;line-height:14px;color:#18181b;letter-spacing:0.443px;">13:11:15</div>
<div class="t" style="left:1115.7px;top:664px;font-size:14px;line-height:14px;color:#18181b;letter-spacing:0.836px;">2025-04-21,</div>
<div class="t" style="left:1115.7px;top:684px;font-size:14px;line-height:14px;color:#18181b;letter-spacing:0.443px;">13:11:15</div>
<div class="t" style="left:1418px;top:674px;font-size:14px;line-height:14px;color:#18181b;">1</div>
<div class="t" style="left:1519px;top:674px;font-size:14px;line-height:14px;color:#18181b;letter-spacing:0.324px;">_PythonDecoratedOperator</div>
<div class="t" style="left:1722px;top:674px;font-size:14px;line-height:14px;color:#18181b;letter-spacing:0.550px;">0.18s</div>
<div class="t" style="left:1802.5px;top:674px;font-size:14px;line-height:14px;color:#18181b;letter-spacing:-0.143px;">v1</div>
<svg style="position:absolute;left:1918px;top:675px;" width="12" height="12" viewBox="0 0 12 12"><path d="M8.7 2.78A4.2 4.2 0 1 0 9.22 8.7" fill="none" stroke="#22339a" stroke-width="1.5" stroke-linecap="round"/><path d="M11 0.6V5.2L6.6 4.3Z" fill="#22339a"/></svg>
<svg style="position:absolute;left:1956px;top:679px;" width="8" height="6" viewBox="0 0 8 6"><path d="M0.5 1h7L4 5z" fill="#22339a"/></svg>
<div style="position:absolute;left:560px;top:714px;width:1430px;height:64px;background:#f2f2f2;"></div>
<div style="position:absolute;left:560px;top:778px;width:1430px;height:1px;background:#e4e4e7;"></div>
<div class="t" style="left:572px;top:739px;font-size:14px;line-height:14px;color:#3b55e6;font-weight:700;letter-spacing:0.325px;">empty_2</div>
<div style="position:absolute;left:796px;top:734px;width:141px;height:24px;background:#d9581e;border-radius:12px;"></div>
<svg style="position:absolute;left:804px;top:739px;" width="14" height="14" viewBox="0 0 14 14"><g fill="none" stroke="#fff" stroke-width="1.3"><circle cx="7" cy="7" r="5.6" stroke-dasharray="2.6 1.4"/><path d="M7 10V4.3M4.6 6.4L7 4l2.4 2.4" stroke-linecap="round" stroke-linejoin="round"/></g></svg>
<div class="t" style="left:822px;top:739px;font-size:14px;line-height:14px;color:#fff;letter-spacing:0.493px;">upstream_failed</div>
<div class="t" style="left:961.6px;top:729px;font-size:14px;line-height:14px;color:#18181b;letter-spacing:0.836px;">2025-04-21,</div>
<div class="t" style="left:961.6px;top:749px;font-size:14px;line-height:14px;color:#18181b;letter-spacing:0.443px;">13:11:15</div>
<div class="t" style="left:1115.7px;top:729px;font-size:14px;line-height:14px;color:#18181b;letter-spacing:0.836px;">2025-04-21,</div>
<div class="t" style="left:1115.7px;top:749px;font-size:14px;line-height:14px;color:#18181b;letter-spacing:0.443px;">13:11:15</div>
<div class="t" style="left:1418px;top:739px;font-size:14px;line-height:14px;color:#18181b;">0</div>
<div class="t" style="left:1519px;top:739px;font-size:14px;line-height:14px;color:#18181b;letter-spacing:0.324px;">_PythonDecoratedOperator</div>
<div class="t" style="left:1722px;top:739px;font-size:14px;line-height:14px;color:#18181b;letter-spacing:0.550px;">0.00s</div>
<div class="t" style="left:1802.5px;top:739px;font-size:14px;line-height:14px;color:#18181b;letter-spacing:-0.143px;">v1</div>
<svg style="position:absolute;left:1918px;top:740px;" width="12" height="12" viewBox="0 0 12 12"><path d="M8.7 2.78A4.2 4.2 0 1 0 9.22 8.7" fill="none" stroke="#22339a" stroke-width="1.5" stroke-linecap="round"/><path d="M11 0.6V5.2L6.6 4.3Z" fill="#22339a"/></svg>
<svg style="position:absolute;left:1956px;top:744px;" width="8" height="6" viewBox="0 0 8 6"><path d="M0.5 1h7L4 5z" fill="#22339a"/></svg>
<div style="position:absolute;left:560px;top:843px;width:1430px;height:1px;background:#e4e4e7;"></div>
<div class="t" style="left:572px;top:804px;font-size:14px;line-height:14px;color:#3b55e6;font-weight:700;letter-spacing:0.287px;">chain_t17</div>
<div style="position:absolute;left:796px;top:799px;width:141px;height:24px;background:#d9581e;border-radius:12px;"></div>
<svg style="position:absolute;left:804px;top:804px;" width="14" height="14" viewBox="0 0 14 14"><g fill="none" stroke="#fff" stroke-width="1.3"><circle cx="7" cy="7" r="5.6" stroke-dasharray="2.6 1.4"/><path d="M7 10V4.3M4.6 6.4L7 4l2.4 2.4" stroke-linecap="round" stroke-linejoin="round"/></g></svg>
<div class="t" style="left:822px;top:804px;font-size:14px;line-height:14px;color:#fff;letter-spacing:0.493px;">upstream_failed</div>
<div class="t" style="left:961.6px;top:794px;font-size:14px;line-height:14px;color:#18181b;letter-spacing:0.836px;">2025-04-21,</div>
<div class="t" style="left:961.6px;top:814px;font-size:14px;line-height:14px;color:#18181b;letter-spacing:0.443px;">13:11:14</div>
<div class="t" style="left:1115.7px;top:794px;font-size:14px;line-height:14px;color:#18181b;letter-spacing:0.836px;">2025-04-21,</div>
<div class="t" style="left:1115.7px;top:814px;font-size:14px;line-height:14px;color:#18181b;letter-spacing:0.443px;">13:11:14</div>
<div class="t" style="left:1418px;top:804px;font-size:14px;line-height:14px;color:#18181b;">0</div>
<div class="t" style="left:1519px;top:804px;font-size:14px;line-height:14px;color:#18181b;letter-spacing:0.324px;">_PythonDecoratedOperator</div>
<div class="t" style="left:1722px;top:804px;font-size:14px;line-height:14px;color:#18181b;letter-spacing:0.550px;">0.00s</div>
<div class="t" style="left:1802.5px;top:804px;font-size:14px;line-height:14px;color:#18181b;letter-spacing:-0.143px;">v1</div>
<svg style="position:absolute;left:1918px;top:805px;" width="12" height="12" viewBox="0 0 12 12"><path d="M8.7 2.78A4.2 4.2 0 1 0 9.22 8.7" fill="none" stroke="#22339a" stroke-width="1.5" stroke-linecap="round"/><path d="M11 0.6V5.2L6.6 4.3Z" fill="#22339a"/></svg>
<svg style="position:absolute;left:1956px;top:809px;" width="8" height="6" viewBox="0 0 8 6"><path d="M0.5 1h7L4 5z" fill="#22339a"/></svg>
<div style="position:absolute;left:560px;top:844px;width:1430px;height:64px;background:#f2f2f2;"></div>
<div style="position:absolute;left:560px;top:908px;width:1430px;height:1px;background:#e4e4e7;"></div>
<div class="t" style="left:572px;top:869px;font-size:14px;line-height:14px;color:#3b55e6;font-weight:700;letter-spacing:0.287px;">chain_t16</div>
<div style="position:absolute;left:796px;top:864px;width:141px;height:24px;background:#d9581e;border-radius:12px;"></div>
<svg style="position:absolute;left:804px;top:869px;" width="14" height="14" viewBox="0 0 14 14"><g fill="none" stroke="#fff" stroke-width="1.3"><circle cx="7" cy="7" r="5.6" stroke-dasharray="2.6 1.4"/><path d="M7 10V4.3M4.6 6.4L7 4l2.4 2.4" stroke-linecap="round" stroke-linejoin="round"/></g></svg>
<div class="t" style="left:822px;top:869px;font-size:14px;line-height:14px;color:#fff;letter-spacing:0.493px;">upstream_failed</div>
<div class="t" style="left:961.6px;top:859px;font-size:14px;line-height:14px;color:#18181b;letter-spacing:0.836px;">2025-04-21,</div>
<div class="t" style="left:961.6px;top:879px;font-size:14px;line-height:14px;color:#18181b;letter-spacing:0.443px;">13:11:14</div>
<div class="t" style="left:1115.7px;top:859px;font-size:14px;line-height:14px;color:#18181b;letter-spacing:0.836px;">2025-04-21,</div>
<div class="t" style="left:1115.7px;top:879px;font-size:14px;line-height:14px;color:#18181b;letter-spacing:0.443px;">13:11:14</div>
<div class="t" style="left:1418px;top:869px;font-size:14px;line-height:14px;color:#18181b;">0</div>
<div class="t" style="left:1519px;top:869px;font-size:14px;line-height:14px;color:#18181b;letter-spacing:0.324px;">_PythonDecoratedOperator</div>
<div class="t" style="left:1722px;top:869px;font-size:14px;line-height:14px;color:#18181b;letter-spacing:0.550px;">0.00s</div>
<div class="t" style="left:1802.5px;top:869px;font-size:14px;line-height:14px;color:#18181b;letter-spacing:-0.143px;">v1</div>
<svg style="position:absolute;left:1918px;top:870px;" width="12" height="12" viewBox="0 0 12 12"><path d="M8.7 2.78A4.2 4.2 0 1 0 9.22 8.7" fill="none" stroke="#22339a" stroke-width="1.5" stroke-linecap="round"/><path d="M11 0.6V5.2L6.6 4.3Z" fill="#22339a"/></svg>
<svg style="position:absolute;left:1956px;top:874px;" width="8" height="6" viewBox="0 0 8 6"><path d="M0.5 1h7L4 5z" fill="#22339a"/></svg>
<div style="position:absolute;left:560px;top:973px;width:1430px;height:1px;background:#e4e4e7;"></div>
<div class="t" style="left:572px;top:934px;font-size:14px;line-height:14px;color:#3b55e6;font-weight:700;letter-spacing:0.287px;">chain_t15</div>
<div style="position:absolute;left:796px;top:929px;width:141px;height:24px;background:#d9581e;border-radius:12px;"></div>
<svg style="position:absolute;left:804px;top:934px;" width="14" height="14" viewBox="0 0 14 14"><g fill="none" stroke="#fff" stroke-width="1.3"><circle cx="7" cy="7" r="5.6" stroke-dasharray="2.6 1.4"/><path d="M7 10V4.3M4.6 6.4L7 4l2.4 2.4" stroke-linecap="round" stroke-linejoin="round"/></g></svg>
<div class="t" style="left:822px;top:934px;font-size:14px;line-height:14px;color:#fff;letter-spacing:0.493px;">upstream_failed</div>
<div class="t" style="left:961.6px;top:924px;font-size:14px;line-height:14px;color:#18181b;letter-spacing:0.836px;">2025-04-21,</div>
<div class="t" style="left:961.6px;top:944px;font-size:14px;line-height:14px;color:#18181b;letter-spacing:0.443px;">13:11:14</div>
<div class="t" style="left:1115.7px;top:924px;font-size:14px;line-height:14px;color:#18181b;letter-spacing:0.836px;">2025-04-21,</div>
<div class="t" style="left:1115.7px;top:944px;font-size:14px;line-height:14px;color:#18181b;letter-spacing:0.443px;">13:11:14</div>
<div class="t" style="left:1418px;top:934px;font-size:14px;line-height:14px;color:#18181b;">0</div>
<div class="t" style="left:1519px;top:934px;font-size:14px;line-height:14px;color:#18181b;letter-spacing:0.324px;">_PythonDecoratedOperator</div>
<div class="t" style="left:1722px;top:934px;font-size:14px;line-height:14px;color:#18181b;letter-spacing:0.550px;">0.00s</div>
<div class="t" style="left:1802.5px;top:934px;font-size:14px;line-height:14px;color:#18181b;letter-spacing:-0.143px;">v1</div>
<svg style="position:absolute;left:1918px;top:935px;" width="12" height="12" viewBox="0 0 12 12"><path d="M8.7 2.78A4.2 4.2 0 1 0 9.22 8.7" fill="none" stroke="#22339a" stroke-width="1.5" stroke-linecap="round"/><path d="M11 0.6V5.2L6.6 4.3Z" fill="#22339a"/></svg>
<svg style="position:absolute;left:1956px;top:939px;" width="8" height="6" viewBox="0 0 8 6"><path d="M0.5 1h7L4 5z" fill="#22339a"/></svg>
<div style="position:absolute;left:560px;top:974px;width:1430px;height:64px;background:#f2f2f2;"></div>
<div style="position:absolute;left:560px;top:1038px;width:1430px;height:1px;background:#e4e4e7;"></div>
<div class="t" style="left:572px;top:999px;font-size:14px;line-height:14px;color:#3b55e6;font-weight:700;letter-spacing:0.272px;">chain_linear_t6</div>
<div style="position:absolute;left:796px;top:994px;width:88px;height:24px;background:#2b7019;border-radius:12px;"></div>
<svg style="position:absolute;left:805px;top:1000px;" width="12" height="12" viewBox="0 0 12 12"><path d="M1.5 6.2l3 3 6-6.5" fill="none" stroke="#fff" stroke-width="1.5" stroke-linecap="round" stroke-linejoin="round"/></svg>
<div class="t" style="left:822px;top:999px;font-size:14px;line-height:14px;color:#fff;letter-spacing:0.418px;">success</div>
<div class="t" style="left:961.6px;top:989px;font-size:14px;line-height:14px;color:#18181b;letter-spacing:0.836px;">2025-04-21,</div>
<div class="t" style="left:961.6px;top:1009px;font-size:14px;line-height:14px;color:#18181b;letter-spacing:0.443px;">13:11:14</div>
<div class="t" style="left:1115.7px;top:989px;font-size:14px;line-height:14px;color:#18181b;letter-spacing:0.836px;">2025-04-21,</div>
<div class="t" style="left:1115.7px;top:1009px;font-size:14px;line-height:14px;color:#18181b;letter-spacing:0.443px;">13:11:14</div>
<div class="t" style="left:1418px;top:999px;font-size:14px;line-height:14px;color:#18181b;">1</div>
<div class="t" style="left:1519px;top:999px;font-size:14px;line-height:14px;color:#18181b;letter-spacing:0.324px;">_PythonDecoratedOperator</div>
<div class="t" style="left:1722px;top:999px;font-size:14px;line-height:14px;color:#18181b;letter-spacing:0.550px;">0.14s</div>
<div class="t" style="left:1802.5px;top:999px;font-size:14px;line-height:14px;color:#18181b;letter-spacing:-0.143px;">v1</div>
<svg style="position:absolute;left:1918px;top:1000px;" width="12" height="12" viewBox="0 0 12 12"><path d="M8.7 2.78A4.2 4.2 0 1 0 9.22 8.7" fill="none" stroke="#22339a" stroke-width="1.5" stroke-linecap="round"/><path d="M11 0.6V5.2L6.6 4.3Z" fill="#22339a"/></svg>
<svg style="position:absolute;left:1956px;top:1004px;" width="8" height="6" viewBox="0 0 8 6"><path d="M0.5 1h7L4 5z" fill="#22339a"/></svg>
<div style="position:absolute;left:560px;top:1103px;width:1430px;height:1px;background:#e4e4e7;"></div>
<div class="t" style="left:572px;top:1064px;font-size:14px;line-height:14px;color:#3b55e6;font-weight:700;letter-spacing:0.272px;">chain_linear_t7</div>
<div style="position:absolute;left:796px;top:1059px;width:88px;height:24px;background:#2b7019;border-radius:12px;"></div>
<svg style="position:absolute;left:805px;top:1065px;" width="12" height="12" viewBox="0 0 12 12"><path d="M1.5 6.2l3 3 6-6.5" fill="none" stroke="#fff" stroke-width="1.5" stroke-linecap="round" stroke-linejoin="round"/></svg>
<div class="t" style="left:822px;top:1064px;font-size:14px;line-height:14px;color:#fff;letter-spacing:0.418px;">success</div>
<div class="t" style="left:961.6px;top:1054px;font-size:14px;line-height:14px;color:#18181b;letter-spacing:0.836px;">2025-04-21,</div>
<div class="t" style="left:961.6px;top:1074px;font-size:14px;line-height:14px;color:#18181b;letter-spacing:0.443px;">13:11:14</div>
<div class="t" style="left:1115.7px;top:1054px;font-size:14px;line-height:14px;color:#18181b;letter-spacing:0.836px;">2025-04-21,</div>
<div class="t" style="left:1115.7px;top:1074px;font-size:14px;line-height:14px;color:#18181b;letter-spacing:0.443px;">13:11:14</div>
<div class="t" style="left:1418px;top:1064px;font-size:14px;line-height:14px;color:#18181b;">1</div>
<div class="t" style="left:1519px;top:1064px;font-size:14px;line-height:14px;color:#18181b;letter-spacing:0.324px;">_PythonDecoratedOperator</div>
<div class="t" style="left:1722px;top:1064px;font-size:14px;line-height:14px;color:#18181b;letter-spacing:0.550px;">0.13s</div>
<div class="t" style="left:1802.5px;top:1064px;font-size:14px;line-height:14px;color:#18181b;letter-spacing:-0.143px;">v1</div>
<svg style="position:absolute;left:1918px;top:1065px;" width="12" height="12" viewBox="0 0 12 12"><path d="M8.7 2.78A4.2 4.2 0 1 0 9.22 8.7" fill="none" stroke="#22339a" stroke-width="1.5" stroke-linecap="round"/><path d="M11 0.6V5.2L6.6 4.3Z" fill="#22339a"/></svg>
<svg style="position:absolute;left:1956px;top:1069px;" width="8" height="6" viewBox="0 0 8 6"><path d="M0.5 1h7L4 5z" fill="#22339a"/></svg>
<div style="position:absolute;left:560px;top:1104px;width:1430px;height:64px;background:#f2f2f2;"></div>
<div style="position:absolute;left:560px;top:1168px;width:1430px;height:1px;background:#e4e4e7;"></div>
<div class="t" style="left:572px;top:1129px;font-size:14px;line-height:14px;color:#3b55e6;font-weight:700;letter-spacing:0.272px;">chain_linear_t5</div>
<div style="position:absolute;left:796px;top:1124px;width:88px;height:24px;background:#2b7019;border-radius:12px;"></div>
<svg style="position:absolute;left:805px;top:1130px;" width="12" height="12" viewBox="0 0 12 12"><path d="M1.5 6.2l3 3 6-6.5" fill="none" stroke="#fff" stroke-width="1.5" stroke-linecap="round" stroke-linejoin="round"/></svg>
<div class="t" style="left:822px;top:1129px;font-size:14px;line-height:14px;color:#fff;letter-spacing:0.418px;">success</div>
<div class="t" style="left:961.6px;top:1119px;font-size:14px;line-height:14px;color:#18181b;letter-spacing:0.836px;">2025-04-21,</div>
<div class="t" style="left:961.6px;top:1139px;font-size:14px;line-height:14px;color:#18181b;letter-spacing:0.443px;">13:11:14</div>
<div class="t" style="left:1115.7px;top:1119px;font-size:14px;line-height:14px;color:#18181b;letter-spacing:0.836px;">2025-04-21,</div>
<div class="t" style="left:1115.7px;top:1139px;font-size:14px;line-height:14px;color:#18181b;letter-spacing:0.443px;">13:11:14</div>
<div class="t" style="left:1418px;top:1129px;font-size:14px;line-height:14px;color:#18181b;">1</div>
<div class="t" style="left:1519px;top:1129px;font-size:14px;line-height:14px;color:#18181b;letter-spacing:0.324px;">_PythonDecoratedOperator</div>
<div class="t" style="left:1722px;top:1129px;font-size:14px;line-height:14px;color:#18181b;letter-spacing:0.550px;">0.13s</div>
<div class="t" style="left:1802.5px;top:1129px;font-size:14px;line-height:14px;color:#18181b;letter-spacing:-0.143px;">v1</div>
<svg style="position:absolute;left:1918px;top:1130px;" width="12" height="12" viewBox="0 0 12 12"><path d="M8.7 2.78A4.2 4.2 0 1 0 9.22 8.7" fill="none" stroke="#22339a" stroke-width="1.5" stroke-linecap="round"/><path d="M11 0.6V5.2L6.6 4.3Z" fill="#22339a"/></svg>
<svg style="position:absolute;left:1956px;top:1134px;" width="8" height="6" viewBox="0 0 8 6"><path d="M0.5 1h7L4 5z" fill="#22339a"/></svg>
<div style="position:absolute;left:560px;top:1233px;width:1430px;height:1px;background:#e4e4e7;"></div>
<div class="t" style="left:572px;top:1194px;font-size:14px;line-height:14px;color:#3b55e6;font-weight:700;letter-spacing:0.287px;">chain_t14</div>
<div style="position:absolute;left:796px;top:1189px;width:141px;height:24px;background:#d9581e;border-radius:12px;"></div>
<svg style="position:absolute;left:804px;top:1194px;" width="14" height="14" viewBox="0 0 14 14"><g fill="none" stroke="#fff" stroke-width="1.3"><circle cx="7" cy="7" r="5.6" stroke-dasharray="2.6 1.4"/><path d="M7 10V4.3M4.6 6.4L7 4l2.4 2.4" stroke-linecap="round" stroke-linejoin="round"/></g></svg>
<div class="t" style="left:822px;top:1194px;font-size:14px;line-height:14px;color:#fff;letter-spacing:0.493px;">upstream_failed</div>
<div class="t" style="left:961.6px;top:1184px;font-size:14px;line-height:14px;color:#18181b;letter-spacing:0.836px;">2025-04-21,</div>
<div class="t" style="left:961.6px;top:1204px;font-size:14px;line-height:14px;color:#18181b;letter-spacing:0.443px;">13:11:14</div>
<div class="t" style="left:1115.7px;top:1184px;font-size:14px;line-height:14px;color:#18181b;letter-spacing:0.836px;">2025-04-21,</div>
<div class="t" style="left:1115.7px;top:1204px;font-size:14px;line-height:14px;color:#18181b;letter-spacing:0.443px;">13:11:14</div>
<div class="t" style="left:1418px;top:1194px;font-size:14px;line-height:14px;color:#18181b;">0</div>
<div class="t" style="left:1519px;top:1194px;font-size:14px;line-height:14px;color:#18181b;letter-spacing:0.324px;">_PythonDecoratedOperator</div>
<div class="t" style="left:1722px;top:1194px;font-size:14px;line-height:14px;color:#18181b;letter-spacing:0.550px;">0.00s</div>
<div class="t" style="left:1802.5px;top:1194px;font-size:14px;line-height:14px;color:#18181b;letter-spacing:-0.143px;">v1</div>
<svg style="position:absolute;left:1918px;top:1195px;" width="12" height="12" viewBox="0 0 12 12"><path d="M8.7 2.78A4.2 4.2 0 1 0 9.22 8.7" fill="none" stroke="#22339a" stroke-width="1.5" stroke-linecap="round"/><path d="M11 0.6V5.2L6.6 4.3Z" fill="#22339a"/></svg>
<svg style="position:absolute;left:1956px;top:1199px;" width="8" height="6" viewBox="0 0 8 6"><path d="M0.5 1h7L4 5z" fill="#22339a"/></svg>
<div style="position:absolute;left:560px;top:1234px;width:1430px;height:3px;background:#f2f2f2;"></div>
<div style="position:absolute;left:0px;top:1150px;width:800px;height:98px;background:radial-gradient(ellipse 420px 66px at 170px 120px, rgba(0,0,0,0.17), rgba(0,0,0,0.07) 50%, rgba(0,0,0,0) 100%);pointer-events:none;"></div>
</div></div></body></html>
